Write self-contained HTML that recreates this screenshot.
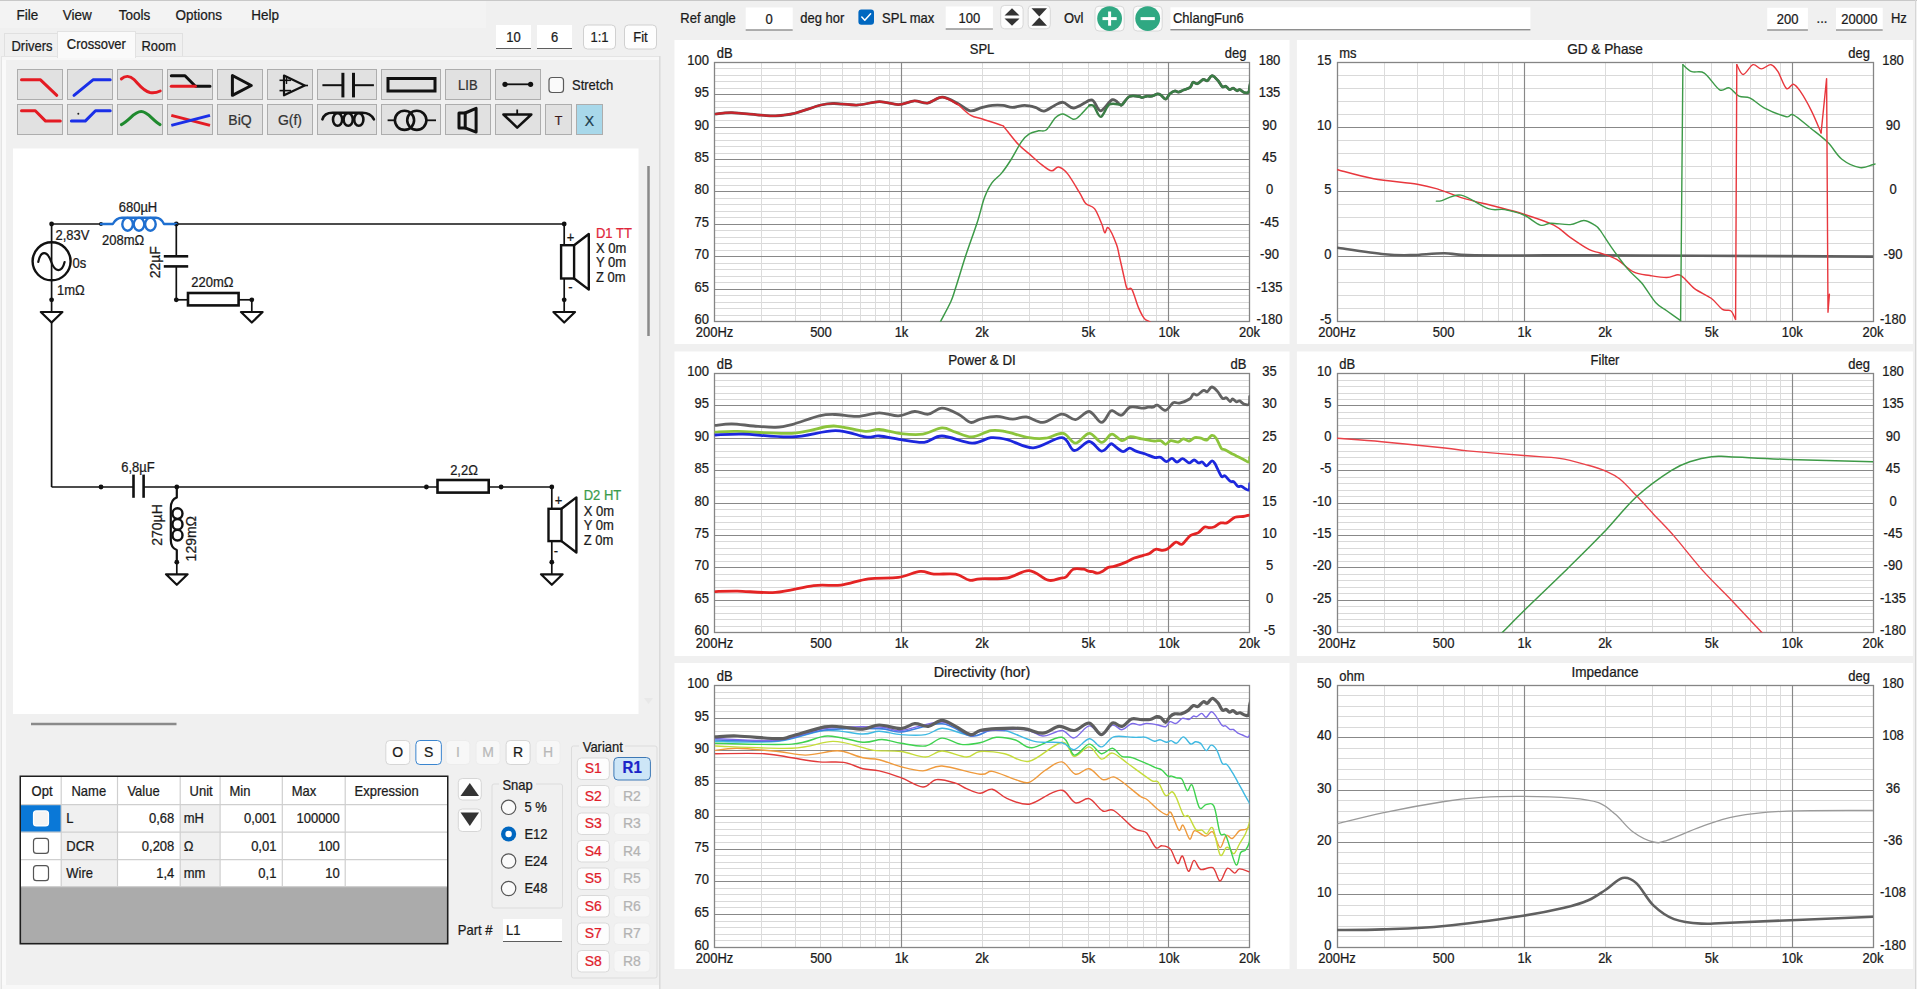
<!DOCTYPE html>
<html><head><meta charset="utf-8"><title>VituixCAD</title>
<style>
html,body{margin:0;padding:0;background:#f0f0f0;width:1917px;height:989px;overflow:hidden}
svg{position:absolute;left:0;top:0;display:block}
text{font-family:"Liberation Sans", sans-serif;stroke-width:0.25px;paint-order:stroke}
</style></head><body>
<svg width="1917" height="989" viewBox="0 0 1917 989">
<rect x="0" y="0" width="1917" height="989" fill="#f0f0f0" rx="0" />
<line x1="0" y1="0.5" x2="1917" y2="0.5" stroke="#c8c8c8" stroke-width="1" />
<line x1="1915.5" y1="0" x2="1915.5" y2="989" stroke="#d6d6d6" stroke-width="1" />
<rect x="0" y="1" width="486" height="27" fill="#f3f3f3" rx="0" />
<text transform="translate(16.6,20) scale(0.93,1)" font-size="14.51" fill="#1a1a1a" stroke="#1a1a1a" text-anchor="start">File</text>
<text transform="translate(62.8,20) scale(0.93,1)" font-size="14.51" fill="#1a1a1a" stroke="#1a1a1a" text-anchor="start">View</text>
<text transform="translate(118.8,20) scale(0.93,1)" font-size="14.51" fill="#1a1a1a" stroke="#1a1a1a" text-anchor="start">Tools</text>
<text transform="translate(175.6,20) scale(0.93,1)" font-size="14.51" fill="#1a1a1a" stroke="#1a1a1a" text-anchor="start">Options</text>
<text transform="translate(251.3,20) scale(0.93,1)" font-size="14.51" fill="#1a1a1a" stroke="#1a1a1a" text-anchor="start">Help</text>
<rect x="4.5" y="33.5" width="53" height="23" fill="#f0f0f0" stroke="#e0e0e0" stroke-width="1" rx="0" />
<rect x="135.5" y="33.5" width="47" height="23" fill="#f0f0f0" stroke="#e0e0e0" stroke-width="1" rx="0" />
<rect x="1.5" y="56.5" width="659" height="940" fill="#f0f0f0" stroke="#e4e4e4" stroke-width="1" rx="0" />
<rect x="2" y="57" width="4" height="932" fill="#fafafa" rx="0" />
<rect x="2" y="57" width="658" height="3" fill="#f7f7f7" rx="0" />
<rect x="57.5" y="31.5" width="78" height="26" fill="#fafafa" stroke="#e2e2e2" stroke-width="1" rx="0" />
<rect x="58" y="56" width="77" height="2" fill="#fafafa" rx="0" />
<text transform="translate(11.5,50.5) scale(0.93,1)" font-size="13.97" fill="#1a1a1a" stroke="#1a1a1a" text-anchor="start">Drivers</text>
<text transform="translate(66.8,48.5) scale(0.93,1)" font-size="13.97" fill="#1a1a1a" stroke="#1a1a1a" text-anchor="start">Crossover</text>
<text transform="translate(141.4,50.5) scale(0.93,1)" font-size="13.97" fill="#1a1a1a" stroke="#1a1a1a" text-anchor="start">Room</text>
<rect x="496" y="25" width="35" height="24" fill="#ffffff" rx="0" />
<line x1="496" y1="48.5" x2="531" y2="48.5" stroke="#5e5e5e" stroke-width="1" />
<text transform="translate(513.5,41.6) scale(0.93,1)" font-size="13.97" fill="#1a1a1a" stroke="#1a1a1a" text-anchor="middle">10</text>
<rect x="537" y="25" width="35" height="24" fill="#ffffff" rx="0" />
<line x1="537" y1="48.5" x2="572" y2="48.5" stroke="#5e5e5e" stroke-width="1" />
<text transform="translate(554.5,41.6) scale(0.93,1)" font-size="13.97" fill="#1a1a1a" stroke="#1a1a1a" text-anchor="middle">6</text>
<rect x="583.5" y="25.0" width="32" height="24" fill="#fdfdfd" stroke="#d0d0d0" stroke-width="1" rx="4" />
<text transform="translate(599.5,41.6) scale(0.93,1)" font-size="13.97" fill="#1a1a1a" stroke="#1a1a1a" text-anchor="middle">1:1</text>
<rect x="624.5" y="25.0" width="32" height="24" fill="#fdfdfd" stroke="#d0d0d0" stroke-width="1" rx="4" />
<text transform="translate(640.5,41.6) scale(0.93,1)" font-size="13.97" fill="#1a1a1a" stroke="#1a1a1a" text-anchor="middle">Fit</text>
<rect x="17.5" y="69.5" width="45" height="30" fill="#e1e1e1" stroke="#adadad" stroke-width="1" rx="0" />
<rect x="17.5" y="104.5" width="45" height="30" fill="#e1e1e1" stroke="#adadad" stroke-width="1" rx="0" />
<rect x="67.5" y="69.5" width="45" height="30" fill="#e1e1e1" stroke="#adadad" stroke-width="1" rx="0" />
<rect x="67.5" y="104.5" width="45" height="30" fill="#e1e1e1" stroke="#adadad" stroke-width="1" rx="0" />
<rect x="117.5" y="69.5" width="45" height="30" fill="#e1e1e1" stroke="#adadad" stroke-width="1" rx="0" />
<rect x="117.5" y="104.5" width="45" height="30" fill="#e1e1e1" stroke="#adadad" stroke-width="1" rx="0" />
<rect x="167.5" y="69.5" width="45" height="30" fill="#e1e1e1" stroke="#adadad" stroke-width="1" rx="0" />
<rect x="167.5" y="104.5" width="45" height="30" fill="#e1e1e1" stroke="#adadad" stroke-width="1" rx="0" />
<rect x="217.5" y="69.5" width="45" height="30" fill="#e1e1e1" stroke="#adadad" stroke-width="1" rx="0" />
<rect x="217.5" y="104.5" width="45" height="30" fill="#e1e1e1" stroke="#adadad" stroke-width="1" rx="0" />
<rect x="267.5" y="69.5" width="45" height="30" fill="#e1e1e1" stroke="#adadad" stroke-width="1" rx="0" />
<rect x="267.5" y="104.5" width="45" height="30" fill="#e1e1e1" stroke="#adadad" stroke-width="1" rx="0" />
<rect x="317.5" y="69.5" width="59" height="30" fill="#e1e1e1" stroke="#adadad" stroke-width="1" rx="0" />
<rect x="381.5" y="69.5" width="59" height="30" fill="#e1e1e1" stroke="#adadad" stroke-width="1" rx="0" />
<rect x="445.5" y="69.5" width="45" height="30" fill="#e1e1e1" stroke="#adadad" stroke-width="1" rx="0" />
<rect x="495.5" y="69.5" width="45" height="30" fill="#e1e1e1" stroke="#adadad" stroke-width="1" rx="0" />
<rect x="317.5" y="104.5" width="59" height="30" fill="#e1e1e1" stroke="#adadad" stroke-width="1" rx="0" />
<rect x="381.5" y="104.5" width="59" height="30" fill="#e1e1e1" stroke="#adadad" stroke-width="1" rx="0" />
<rect x="445.5" y="104.5" width="45" height="30" fill="#e1e1e1" stroke="#adadad" stroke-width="1" rx="0" />
<rect x="495.5" y="104.5" width="45" height="30" fill="#e1e1e1" stroke="#adadad" stroke-width="1" rx="0" />
<rect x="545.5" y="104.5" width="26" height="30" fill="#e1e1e1" stroke="#adadad" stroke-width="1" rx="0" />
<rect x="576.5" y="104.5" width="26" height="30" fill="#a8d8ea" stroke="#adadad" stroke-width="1" rx="0" />
<polyline points="21.5,79.8 40.5,79.8 56.8,95.3" stroke="#e41b23" stroke-width="3" fill="none" stroke-linejoin="round" stroke-linecap="round" />
<polyline points="74.0,95.3 93.0,79.8 110.2,79.8" stroke="#1a2fe8" stroke-width="3" fill="none" stroke-linejoin="round" stroke-linecap="round" />
<path d="M121.4,78.9 C125,75.5 130,75.5 134,79.5 C139,84.5 143,91 150,92.5 C154,93.2 157,92.5 160.2,91" stroke="#e41b23" stroke-width="3" fill="none" stroke-linejoin="round" stroke-linecap="round" />
<polyline points="171.3,75.8 185.0,75.8 195.4,86.2 210.0,86.2" stroke="#111" stroke-width="3" fill="none" stroke-linejoin="round" stroke-linecap="round" />
<polyline points="171.3,86.2 195.4,86.2" stroke="#e41b23" stroke-width="3" fill="none" stroke-linejoin="round" stroke-linecap="round" />
<path d="M232.4,75.5 L251.3,85.5 L232.4,95.3 Z" stroke="#111" stroke-width="3" fill="none" stroke-linejoin="round" stroke-linecap="round" />
<path d="M284,75.5 L304.7,85.5 L284,95.3 Z" stroke="#111" stroke-width="2.2" fill="none" stroke-linejoin="round" stroke-linecap="round" />
<line x1="279.5" y1="80.3" x2="291" y2="80.3" stroke="#111" stroke-width="1.6" />
<line x1="279.5" y1="90.6" x2="291" y2="90.6" stroke="#111" stroke-width="1.6" />
<line x1="286.5" y1="76.5" x2="286.5" y2="84" stroke="#111" stroke-width="1.4" />
<line x1="304.7" y1="85.5" x2="308" y2="85.5" stroke="#111" stroke-width="1.6" />
<line x1="322.4" y1="85.2" x2="342.9" y2="85.2" stroke="#111" stroke-width="2" />
<line x1="353.5" y1="85.2" x2="373.9" y2="85.2" stroke="#111" stroke-width="2" />
<line x1="342.9" y1="72.8" x2="342.9" y2="97.4" stroke="#111" stroke-width="3" />
<line x1="353.5" y1="72.8" x2="353.5" y2="97.4" stroke="#111" stroke-width="3" />
<rect x="388" y="78.5" width="47" height="12.5" fill="none" stroke="#111" stroke-width="3" rx="0" />
<text transform="translate(467.8,90) scale(0.93,1)" font-size="13.97" fill="#333" stroke="#333" text-anchor="middle">LIB</text>
<line x1="505" y1="84.3" x2="530.6" y2="84.3" stroke="#111" stroke-width="1.8" />
<circle cx="505" cy="84.3" r="2.6" fill="#111"/><circle cx="530.6" cy="84.3" r="2.6" fill="#111"/>
<rect x="549" y="77.5" width="14.5" height="15" fill="#fafafa" stroke="#5a5a5a" stroke-width="1.2" rx="3" />
<text transform="translate(572,89.5) scale(0.93,1)" font-size="13.97" fill="#1a1a1a" stroke="#1a1a1a" text-anchor="start">Stretch</text>
<polyline points="21.5,110.8 35.3,110.8 45.6,121.1 60.3,121.1" stroke="#e41b23" stroke-width="3" fill="none" stroke-linejoin="round" stroke-linecap="round" />
<polyline points="71.4,121.1 85.2,121.1 95.5,110.8 110.2,110.8" stroke="#1a2fe8" stroke-width="3" fill="none" stroke-linejoin="round" stroke-linecap="round" />
<circle cx="78.3" cy="113.7" r="1" fill="#222"/>
<path d="M121.4,124.6 C130,120 134,111.6 141.2,111.6 C148,111.6 152,120 160.1,124.6" stroke="#1f8a2e" stroke-width="3" fill="none" stroke-linejoin="round" stroke-linecap="round" />
<line x1="171.3" y1="115.4" x2="210" y2="125.4" stroke="#e41b23" stroke-width="3" />
<line x1="171.3" y1="125.4" x2="210" y2="115.4" stroke="#1a2fe8" stroke-width="3" />
<text transform="translate(240,125) scale(0.93,1)" font-size="15.05" fill="#333" stroke="#333" text-anchor="middle">BiQ</text>
<text transform="translate(290,125) scale(0.93,1)" font-size="15.05" fill="#333" stroke="#333" text-anchor="middle">G(f)</text>
<path d="M322.4,119.3 C324,114 329,112.5 334,112.8 L361,112.8 C366,112.5 371,114 373.9,119.3" stroke="#111" stroke-width="2.6" fill="none" stroke-linejoin="round" stroke-linecap="round" />
<ellipse cx="337.6" cy="119.5" rx="4.6" ry="6.3" fill="none" stroke="#111" stroke-width="2.6"/>
<ellipse cx="348.2" cy="119.5" rx="4.6" ry="6.3" fill="none" stroke="#111" stroke-width="2.6"/>
<ellipse cx="358.8" cy="119.5" rx="4.6" ry="6.3" fill="none" stroke="#111" stroke-width="2.6"/>
<line x1="387.6" y1="120.3" x2="395" y2="120.3" stroke="#111" stroke-width="1.8" />
<line x1="427" y1="120.3" x2="436" y2="120.3" stroke="#111" stroke-width="1.8" />
<circle cx="404.5" cy="120.3" r="9.6" fill="none" stroke="#111" stroke-width="2.6"/>
<circle cx="416.8" cy="120.3" r="9.6" fill="none" stroke="#111" stroke-width="2.6"/>
<path d="M459,113 L465.2,113 L465.2,127.9 L459,127.9 Z" stroke="#111" stroke-width="3" fill="none" stroke-linejoin="round" stroke-linecap="round" />
<path d="M465.2,113 L476.1,108.4 L476.1,132.1 L465.2,127.9" stroke="#111" stroke-width="3" fill="none" stroke-linejoin="round" stroke-linecap="round" />
<line x1="517.2" y1="109.5" x2="517.2" y2="114.5" stroke="#111" stroke-width="1.8" />
<path d="M503.5,114.5 L531.3,114.5 L517.2,127.6 Z" stroke="#111" stroke-width="2.6" fill="none" stroke-linejoin="round" stroke-linecap="round" />
<text transform="translate(558.6,125) scale(0.93,1)" font-size="13.44" fill="#3a1a1a" stroke="#3a1a1a" text-anchor="middle">T</text>
<text transform="translate(589.5,125.5) scale(0.93,1)" font-size="15.05" fill="#1a3a4a" stroke="#1a3a4a" text-anchor="middle">X</text>
<rect x="13" y="148.5" width="625.5" height="565.5" fill="#ffffff" rx="0" />
<line x1="648.5" y1="166" x2="648.5" y2="336" stroke="#8a8a8a" stroke-width="2.5" />
<path d="M644,698 L653,698 L648.5,704 Z" fill="#e8e8e8"/>
<line x1="31" y1="724" x2="176.5" y2="724" stroke="#8a8a8a" stroke-width="2.5" />
<line x1="51.6" y1="224" x2="101" y2="224" stroke="#111" stroke-width="1.7" />
<line x1="176.3" y1="224" x2="564.2" y2="224" stroke="#111" stroke-width="1.7" />
<circle cx="51.6" cy="224" r="2.4" fill="#111"/>
<circle cx="101" cy="224" r="2" fill="#111"/>
<circle cx="176.3" cy="224" r="2.4" fill="#111"/>
<line x1="51.6" y1="224" x2="51.6" y2="312" stroke="#111" stroke-width="1.7" />
<circle cx="51.6" cy="261.3" r="19" fill="none" stroke="#111" stroke-width="2.4"/>
<path d="M38.3,261.8 C40.5,251 47,249.5 51.3,262 C55,272.5 62,273 64.6,262" stroke="#111" stroke-width="2.2" fill="none" stroke-linejoin="round" stroke-linecap="round" />
<line x1="51.6" y1="242.3" x2="51.6" y2="280.3" stroke="#111" stroke-width="0" />
<circle cx="51.6" cy="299.8" r="2.4" fill="#111"/>
<path d="M40.8,312 L62.400000000000006,312 L51.6,322.5 Z" stroke="#111" stroke-width="2.2" fill="none" stroke-linejoin="round" stroke-linecap="round" />
<line x1="51.6" y1="322" x2="51.6" y2="487" stroke="#111" stroke-width="1.7" />
<text transform="translate(55.5,239.5) scale(0.93,1)" font-size="13.97" fill="#1a1a1a" stroke="#1a1a1a" text-anchor="start">2,83V</text>
<text transform="translate(72.5,268) scale(0.93,1)" font-size="13.97" fill="#1a1a1a" stroke="#1a1a1a" text-anchor="start">0s</text>
<text transform="translate(57,295) scale(0.93,1)" font-size="13.97" fill="#1a1a1a" stroke="#1a1a1a" text-anchor="start">1mΩ</text>
<path d="M101,224 L112.8,224 C115,220 118,217.8 122,217.8 L156,217.8 C160,217.8 162,220 164,224 L176.3,224" stroke="#1f6fd0" stroke-width="2.4" fill="none" stroke-linejoin="round" stroke-linecap="round" />
<ellipse cx="127.6" cy="224.3" rx="5.3" ry="6.4" fill="none" stroke="#1f6fd0" stroke-width="2.4"/>
<ellipse cx="139" cy="224.3" rx="5.3" ry="6.4" fill="none" stroke="#1f6fd0" stroke-width="2.4"/>
<ellipse cx="150.4" cy="224.3" rx="5.3" ry="6.4" fill="none" stroke="#1f6fd0" stroke-width="2.4"/>
<text transform="translate(138,211.5) scale(0.93,1)" font-size="13.97" fill="#1a1a1a" stroke="#1a1a1a" text-anchor="middle">680µH</text>
<text transform="translate(102,245) scale(0.93,1)" font-size="13.97" fill="#1a1a1a" stroke="#1a1a1a" text-anchor="start">208mΩ</text>
<line x1="176.3" y1="224" x2="176.3" y2="256.3" stroke="#111" stroke-width="1.7" />
<line x1="176.3" y1="266.4" x2="176.3" y2="300" stroke="#111" stroke-width="1.7" />
<line x1="163.8" y1="256.3" x2="188.2" y2="256.3" stroke="#111" stroke-width="2.6" />
<line x1="163.8" y1="266.4" x2="188.2" y2="266.4" stroke="#111" stroke-width="2.6" />
<text x="0" y="0" font-size="13.97" fill="#1a1a1a" stroke="#1a1a1a" text-anchor="middle" transform="translate(159.5,262.3) rotate(-90)">22µF</text>
<line x1="176.3" y1="299.8" x2="188" y2="299.8" stroke="#111" stroke-width="1.7" />
<rect x="188" y="293" width="50.6" height="12.4" fill="none" stroke="#111" stroke-width="2.6" rx="0" />
<line x1="238.6" y1="299.8" x2="251.8" y2="299.8" stroke="#111" stroke-width="1.7" />
<line x1="251.8" y1="299.8" x2="251.8" y2="312" stroke="#111" stroke-width="1.7" />
<circle cx="176.3" cy="299.8" r="2.4" fill="#111"/>
<circle cx="251.8" cy="299.8" r="2.4" fill="#111"/>
<path d="M241.0,312 L262.6,312 L251.8,322.5 Z" stroke="#111" stroke-width="2.2" fill="none" stroke-linejoin="round" stroke-linecap="round" />
<text transform="translate(212.3,286.5) scale(0.93,1)" font-size="13.97" fill="#1a1a1a" stroke="#1a1a1a" text-anchor="middle">220mΩ</text>
<line x1="564.2" y1="224" x2="564.2" y2="245.2" stroke="#111" stroke-width="1.7" />
<circle cx="564.2" cy="224" r="2.4" fill="#111"/>
<rect x="561.1" y="245.2" width="13.0" height="33.30000000000001" fill="none" stroke="#111" stroke-width="2.4" rx="0" />
<path d="M574.1,245.2 L588.8,234 L588.8,289.6 L574.1,278.5" stroke="#111" stroke-width="2.4" fill="none" stroke-linejoin="round" stroke-linecap="round" />
<line x1="564.2" y1="278.5" x2="564.2" y2="312" stroke="#111" stroke-width="1.7" />
<circle cx="564.2" cy="299.8" r="2.4" fill="#111"/>
<path d="M553.4000000000001,312 L575.0,312 L564.2,322.5 Z" stroke="#111" stroke-width="2.2" fill="none" stroke-linejoin="round" stroke-linecap="round" />
<text transform="translate(570.6,242) scale(0.93,1)" font-size="13.97" fill="#1a1a1a" stroke="#1a1a1a" text-anchor="middle">+</text>
<text transform="translate(570.3,292) scale(0.93,1)" font-size="13.97" fill="#1a1a1a" stroke="#1a1a1a" text-anchor="middle">-</text>
<text transform="translate(596,238) scale(0.93,1)" font-size="13.97" fill="#e0263a" stroke="#e0263a" text-anchor="start">D1 TT</text>
<text transform="translate(596,252.5) scale(0.93,1)" font-size="13.97" fill="#1a1a1a" stroke="#1a1a1a" text-anchor="start">X 0m</text>
<text transform="translate(596,267) scale(0.93,1)" font-size="13.97" fill="#1a1a1a" stroke="#1a1a1a" text-anchor="start">Y 0m</text>
<text transform="translate(596,281.5) scale(0.93,1)" font-size="13.97" fill="#1a1a1a" stroke="#1a1a1a" text-anchor="start">Z 0m</text>
<line x1="51.6" y1="487" x2="133.5" y2="487" stroke="#111" stroke-width="1.7" />
<line x1="143.6" y1="487" x2="437.5" y2="487" stroke="#111" stroke-width="1.7" />
<circle cx="101" cy="487" r="2.4" fill="#111"/>
<circle cx="176.8" cy="487" r="2.4" fill="#111"/>
<circle cx="426.4" cy="487" r="2.4" fill="#111"/>
<line x1="133.5" y1="474.6" x2="133.5" y2="497.8" stroke="#111" stroke-width="2.6" />
<line x1="143.6" y1="474.6" x2="143.6" y2="497.8" stroke="#111" stroke-width="2.6" />
<text transform="translate(138,471.5) scale(0.93,1)" font-size="13.97" fill="#1a1a1a" stroke="#1a1a1a" text-anchor="middle">6,8µF</text>
<path d="M176.8,487 L176.8,497.4 C172.5,499 170.8,503 170.8,508 L170.8,540 C170.8,545 172.5,548.5 176.8,550 L176.8,562.2" stroke="#111" stroke-width="2.2" fill="none" stroke-linejoin="round" stroke-linecap="round" />
<ellipse cx="177.5" cy="513.6" rx="5" ry="5.3" fill="none" stroke="#111" stroke-width="2.4"/>
<ellipse cx="177.5" cy="524.4" rx="5" ry="5.3" fill="none" stroke="#111" stroke-width="2.4"/>
<ellipse cx="177.5" cy="535.2" rx="5" ry="5.3" fill="none" stroke="#111" stroke-width="2.4"/>
<line x1="176.8" y1="562.2" x2="176.8" y2="574.3" stroke="#111" stroke-width="1.7" />
<circle cx="176.8" cy="562.2" r="2.4" fill="#111"/>
<path d="M166.0,574.3 L187.60000000000002,574.3 L176.8,584.8 Z" stroke="#111" stroke-width="2.2" fill="none" stroke-linejoin="round" stroke-linecap="round" />
<text x="0" y="0" font-size="13.97" fill="#1a1a1a" stroke="#1a1a1a" text-anchor="middle" transform="translate(161.8,525) rotate(-90)">270µH</text>
<text x="0" y="0" font-size="13.97" fill="#1a1a1a" stroke="#1a1a1a" text-anchor="middle" transform="translate(195.8,538.7) rotate(-90)">129mΩ</text>
<rect x="437.5" y="480" width="51.2" height="12.6" fill="none" stroke="#111" stroke-width="2.6" rx="0" />
<line x1="488.7" y1="487" x2="551.8" y2="487" stroke="#111" stroke-width="1.7" />
<circle cx="501.1" cy="487" r="2.4" fill="#111"/>
<circle cx="551.8" cy="487" r="2.4" fill="#111"/>
<text transform="translate(464,474.5) scale(0.93,1)" font-size="13.97" fill="#1a1a1a" stroke="#1a1a1a" text-anchor="middle">2,2Ω</text>
<line x1="551.8" y1="487" x2="551.8" y2="508.8" stroke="#111" stroke-width="1.7" />
<rect x="548.5" y="508.8" width="13.0" height="32.30000000000001" fill="none" stroke="#111" stroke-width="2.4" rx="0" />
<path d="M561.5,508.8 L576.4,497.4 L576.4,552.5 L561.5,541.1" stroke="#111" stroke-width="2.4" fill="none" stroke-linejoin="round" stroke-linecap="round" />
<line x1="551.8" y1="541.1" x2="551.8" y2="574.3" stroke="#111" stroke-width="1.7" />
<circle cx="551.8" cy="562.2" r="2.4" fill="#111"/>
<path d="M541.0,574.3 L562.5999999999999,574.3 L551.8,584.8 Z" stroke="#111" stroke-width="2.2" fill="none" stroke-linejoin="round" stroke-linecap="round" />
<text transform="translate(558.6,505) scale(0.93,1)" font-size="13.97" fill="#1a1a1a" stroke="#1a1a1a" text-anchor="middle">+</text>
<text transform="translate(556,556) scale(0.93,1)" font-size="13.97" fill="#1a1a1a" stroke="#1a1a1a" text-anchor="middle">-</text>
<text transform="translate(583.7,500) scale(0.93,1)" font-size="13.97" fill="#3b9b4b" stroke="#3b9b4b" text-anchor="start">D2 HT</text>
<text transform="translate(583.7,515.5) scale(0.93,1)" font-size="13.97" fill="#1a1a1a" stroke="#1a1a1a" text-anchor="start">X 0m</text>
<text transform="translate(583.7,530) scale(0.93,1)" font-size="13.97" fill="#1a1a1a" stroke="#1a1a1a" text-anchor="start">Y 0m</text>
<text transform="translate(583.7,544.5) scale(0.93,1)" font-size="13.97" fill="#1a1a1a" stroke="#1a1a1a" text-anchor="start">Z 0m</text>
<rect x="385.8" y="740.5" width="24" height="24" fill="#fdfdfd" stroke="#d6d6d6" stroke-width="1" rx="4" />
<text transform="translate(397.8,757.1) scale(0.93,1)" font-size="15.05" fill="#1a1a1a" stroke="#1a1a1a" text-anchor="middle">O</text>
<rect x="415.87" y="740.5" width="25.5" height="24" fill="#fdfdfd" stroke="#3a85cf" stroke-width="1" rx="4" />
<text transform="translate(428.62,757.1) scale(0.93,1)" font-size="15.05" fill="#1a1a1a" stroke="#1a1a1a" text-anchor="middle">S</text>
<rect x="445.94" y="740.5" width="24" height="24" fill="#f7f7f7" stroke="#ececec" stroke-width="1" rx="4" />
<text transform="translate(457.94,757.1) scale(0.93,1)" font-size="15.05" fill="#b8b8b8" stroke="#b8b8b8" text-anchor="middle">I</text>
<rect x="476.01" y="740.5" width="24" height="24" fill="#f7f7f7" stroke="#ececec" stroke-width="1" rx="4" />
<text transform="translate(488.01,757.1) scale(0.93,1)" font-size="15.05" fill="#b8b8b8" stroke="#b8b8b8" text-anchor="middle">M</text>
<rect x="506.08000000000004" y="740.5" width="24" height="24" fill="#fdfdfd" stroke="#d6d6d6" stroke-width="1" rx="4" />
<text transform="translate(518.08,757.1) scale(0.93,1)" font-size="15.05" fill="#1a1a1a" stroke="#1a1a1a" text-anchor="middle">R</text>
<rect x="536.15" y="740.5" width="24" height="24" fill="#f7f7f7" stroke="#ececec" stroke-width="1" rx="4" />
<text transform="translate(548.15,757.1) scale(0.93,1)" font-size="15.05" fill="#b8b8b8" stroke="#b8b8b8" text-anchor="middle">H</text>
<rect x="20.3" y="776.3" width="427.4" height="167.4" fill="#ababab" stroke="#1e1e1e" stroke-width="1.6" rx="0" />
<rect x="21" y="777" width="426" height="110" fill="#ffffff" rx="0" />
<rect x="61.2" y="804.7" width="56.3" height="27.5" fill="#f0f0f0" rx="0" />
<rect x="180.2" y="804.7" width="39.9" height="27.5" fill="#f0f0f0" rx="0" />
<rect x="61.2" y="832.2" width="56.3" height="27.5" fill="#f0f0f0" rx="0" />
<rect x="180.2" y="832.2" width="39.9" height="27.5" fill="#f0f0f0" rx="0" />
<rect x="61.2" y="859.7" width="56.3" height="27.0" fill="#f0f0f0" rx="0" />
<rect x="180.2" y="859.7" width="39.9" height="27.0" fill="#f0f0f0" rx="0" />
<rect x="21" y="805" width="40.2" height="27.2" fill="#0a78d7" rx="0" />
<line x1="61.2" y1="777" x2="61.2" y2="886.7" stroke="#cfcfcf" stroke-width="1.2" />
<line x1="117.5" y1="777" x2="117.5" y2="886.7" stroke="#cfcfcf" stroke-width="1.2" />
<line x1="180.2" y1="777" x2="180.2" y2="886.7" stroke="#cfcfcf" stroke-width="1.2" />
<line x1="220.1" y1="777" x2="220.1" y2="886.7" stroke="#cfcfcf" stroke-width="1.2" />
<line x1="282.3" y1="777" x2="282.3" y2="886.7" stroke="#cfcfcf" stroke-width="1.2" />
<line x1="345.2" y1="777" x2="345.2" y2="886.7" stroke="#cfcfcf" stroke-width="1.2" />
<line x1="21" y1="804.7" x2="447" y2="804.7" stroke="#cfcfcf" stroke-width="1.2" />
<line x1="21" y1="832.2" x2="447" y2="832.2" stroke="#cfcfcf" stroke-width="1.2" />
<line x1="21" y1="859.7" x2="447" y2="859.7" stroke="#cfcfcf" stroke-width="1.2" />
<line x1="21" y1="886.7" x2="447" y2="886.7" stroke="#cfcfcf" stroke-width="1.2" />
<text transform="translate(31.6,796) scale(0.93,1)" font-size="13.97" fill="#1a1a1a" stroke="#1a1a1a" text-anchor="start">Opt</text>
<text transform="translate(71.5,796) scale(0.93,1)" font-size="13.97" fill="#1a1a1a" stroke="#1a1a1a" text-anchor="start">Name</text>
<text transform="translate(127.4,796) scale(0.93,1)" font-size="13.97" fill="#1a1a1a" stroke="#1a1a1a" text-anchor="start">Value</text>
<text transform="translate(189.6,796) scale(0.93,1)" font-size="13.97" fill="#1a1a1a" stroke="#1a1a1a" text-anchor="start">Unit</text>
<text transform="translate(229.5,796) scale(0.93,1)" font-size="13.97" fill="#1a1a1a" stroke="#1a1a1a" text-anchor="start">Min</text>
<text transform="translate(291.7,796) scale(0.93,1)" font-size="13.97" fill="#1a1a1a" stroke="#1a1a1a" text-anchor="start">Max</text>
<text transform="translate(354.6,796) scale(0.93,1)" font-size="13.97" fill="#1a1a1a" stroke="#1a1a1a" text-anchor="start">Expression</text>
<rect x="33.5" y="810.95" width="15" height="15" fill="#f4f4f4" stroke="#ffffff" stroke-width="1.2" rx="3" />
<text transform="translate(66.3,823.25) scale(0.93,1)" font-size="13.97" fill="#1a1a1a" stroke="#1a1a1a" text-anchor="start">L</text>
<text transform="translate(174.3,823.25) scale(0.93,1)" font-size="13.97" fill="#1a1a1a" stroke="#1a1a1a" text-anchor="end">0,68</text>
<text transform="translate(183.7,823.25) scale(0.93,1)" font-size="13.97" fill="#1a1a1a" stroke="#1a1a1a" text-anchor="start">mH</text>
<text transform="translate(276.4,823.25) scale(0.93,1)" font-size="13.97" fill="#1a1a1a" stroke="#1a1a1a" text-anchor="end">0,001</text>
<text transform="translate(339.8,823.25) scale(0.93,1)" font-size="13.97" fill="#1a1a1a" stroke="#1a1a1a" text-anchor="end">100000</text>
<rect x="33.5" y="838.45" width="15" height="15" fill="#ffffff" stroke="#555" stroke-width="1.2" rx="3" />
<text transform="translate(66.3,850.75) scale(0.93,1)" font-size="13.97" fill="#1a1a1a" stroke="#1a1a1a" text-anchor="start">DCR</text>
<text transform="translate(174.3,850.75) scale(0.93,1)" font-size="13.97" fill="#1a1a1a" stroke="#1a1a1a" text-anchor="end">0,208</text>
<text transform="translate(183.7,850.75) scale(0.93,1)" font-size="13.97" fill="#1a1a1a" stroke="#1a1a1a" text-anchor="start">Ω</text>
<text transform="translate(276.4,850.75) scale(0.93,1)" font-size="13.97" fill="#1a1a1a" stroke="#1a1a1a" text-anchor="end">0,01</text>
<text transform="translate(339.8,850.75) scale(0.93,1)" font-size="13.97" fill="#1a1a1a" stroke="#1a1a1a" text-anchor="end">100</text>
<rect x="33.5" y="865.7" width="15" height="15" fill="#ffffff" stroke="#555" stroke-width="1.2" rx="3" />
<text transform="translate(66.3,878.0) scale(0.93,1)" font-size="13.97" fill="#1a1a1a" stroke="#1a1a1a" text-anchor="start">Wire</text>
<text transform="translate(174.3,878.0) scale(0.93,1)" font-size="13.97" fill="#1a1a1a" stroke="#1a1a1a" text-anchor="end">1,4</text>
<text transform="translate(183.7,878.0) scale(0.93,1)" font-size="13.97" fill="#1a1a1a" stroke="#1a1a1a" text-anchor="start">mm</text>
<text transform="translate(276.4,878.0) scale(0.93,1)" font-size="13.97" fill="#1a1a1a" stroke="#1a1a1a" text-anchor="end">0,1</text>
<text transform="translate(339.8,878.0) scale(0.93,1)" font-size="13.97" fill="#1a1a1a" stroke="#1a1a1a" text-anchor="end">10</text>
<rect x="458.3" y="778.5" width="23" height="21.5" fill="#fdfdfd" stroke="#d6d6d6" stroke-width="1" rx="4" />
<path d="M460.5,796 L479,796 L469.8,783 Z" fill="#333"/>
<rect x="458.3" y="809.0" width="23" height="22.5" fill="#fdfdfd" stroke="#d6d6d6" stroke-width="1" rx="4" />
<path d="M460.5,812.5 L479,812.5 L469.8,826 Z" fill="#333"/>
<rect x="492" y="784" width="70.5" height="124" fill="none" stroke="#dcdcdc" stroke-width="1" rx="2" />
<rect x="499" y="776" width="37" height="14" fill="#f0f0f0" rx="0" />
<text transform="translate(502.4,789.5) scale(0.93,1)" font-size="13.97" fill="#1a1a1a" stroke="#1a1a1a" text-anchor="start">Snap</text>
<circle cx="508.6" cy="807.3" r="7.2" fill="#fafafa" stroke="#555" stroke-width="1.2"/>
<text transform="translate(524.4,812.0999999999999) scale(0.93,1)" font-size="13.97" fill="#1a1a1a" stroke="#1a1a1a" text-anchor="start">5 %</text>
<circle cx="508.6" cy="834" r="7.6" fill="#0067c0"/><circle cx="508.6" cy="834" r="3.2" fill="#fff"/>
<text transform="translate(524.4,838.8) scale(0.93,1)" font-size="13.97" fill="#1a1a1a" stroke="#1a1a1a" text-anchor="start">E12</text>
<circle cx="508.6" cy="861" r="7.2" fill="#fafafa" stroke="#555" stroke-width="1.2"/>
<text transform="translate(524.4,865.8) scale(0.93,1)" font-size="13.97" fill="#1a1a1a" stroke="#1a1a1a" text-anchor="start">E24</text>
<circle cx="508.6" cy="888.5" r="7.2" fill="#fafafa" stroke="#555" stroke-width="1.2"/>
<text transform="translate(524.4,893.3) scale(0.93,1)" font-size="13.97" fill="#1a1a1a" stroke="#1a1a1a" text-anchor="start">E48</text>
<text transform="translate(457.8,935) scale(0.93,1)" font-size="13.97" fill="#1a1a1a" stroke="#1a1a1a" text-anchor="start">Part #</text>
<rect x="503" y="919" width="59" height="23" fill="#ffffff" rx="0" />
<line x1="503" y1="941.5" x2="562" y2="941.5" stroke="#5e5e5e" stroke-width="1" />
<text transform="translate(None,935.1) scale(0.93,1)" font-size="13.97" fill="#1a1a1a" stroke="#1a1a1a" text-anchor="start"></text>
<text transform="translate(506,935) scale(0.93,1)" font-size="13.97" fill="#1a1a1a" stroke="#1a1a1a" text-anchor="start">L1</text>
<rect x="571.5" y="746" width="85.5" height="232" fill="none" stroke="#dcdcdc" stroke-width="1" rx="2" />
<rect x="579" y="740" width="46" height="14" fill="#f0f0f0" rx="0" />
<text transform="translate(582.7,751.5) scale(0.93,1)" font-size="13.97" fill="#1a1a1a" stroke="#1a1a1a" text-anchor="start">Variant</text>
<rect x="577.3" y="758.0" width="32" height="21.5" fill="#fdfdfd" stroke="#d9d9d9" stroke-width="1" rx="4" />
<text transform="translate(593.3,773.35) scale(0.93,1)" font-size="15.05" fill="#e0202a" stroke="#e0202a" text-anchor="middle">S1</text>
<rect x="613.9" y="757.5" width="36.5" height="22.5" fill="#cde6f7" stroke="#3d78b5" stroke-width="1" rx="4" />
<text transform="translate(632.15,773.35) scale(0.93,1)" font-size="16.12" fill="#1a24c8" stroke="#1a24c8" text-anchor="middle" font-weight="bold">R1</text>
<rect x="577.3" y="785.5" width="32" height="21.5" fill="#fdfdfd" stroke="#d9d9d9" stroke-width="1" rx="4" />
<text transform="translate(593.3,800.85) scale(0.93,1)" font-size="15.05" fill="#e0202a" stroke="#e0202a" text-anchor="middle">S2</text>
<rect x="613.9" y="785.5" width="36" height="21.5" fill="#f7f7f7" stroke="#ededed" stroke-width="1" rx="4" />
<text transform="translate(631.9,800.85) scale(0.93,1)" font-size="15.05" fill="#b3b3b3" stroke="#b3b3b3" text-anchor="middle">R2</text>
<rect x="577.3" y="813.0" width="32" height="21.5" fill="#fdfdfd" stroke="#d9d9d9" stroke-width="1" rx="4" />
<text transform="translate(593.3,828.35) scale(0.93,1)" font-size="15.05" fill="#e0202a" stroke="#e0202a" text-anchor="middle">S3</text>
<rect x="613.9" y="813.0" width="36" height="21.5" fill="#f7f7f7" stroke="#ededed" stroke-width="1" rx="4" />
<text transform="translate(631.9,828.35) scale(0.93,1)" font-size="15.05" fill="#b3b3b3" stroke="#b3b3b3" text-anchor="middle">R3</text>
<rect x="577.3" y="840.5" width="32" height="21.5" fill="#fdfdfd" stroke="#d9d9d9" stroke-width="1" rx="4" />
<text transform="translate(593.3,855.85) scale(0.93,1)" font-size="15.05" fill="#e0202a" stroke="#e0202a" text-anchor="middle">S4</text>
<rect x="613.9" y="840.5" width="36" height="21.5" fill="#f7f7f7" stroke="#ededed" stroke-width="1" rx="4" />
<text transform="translate(631.9,855.85) scale(0.93,1)" font-size="15.05" fill="#b3b3b3" stroke="#b3b3b3" text-anchor="middle">R4</text>
<rect x="577.3" y="868.0" width="32" height="21.5" fill="#fdfdfd" stroke="#d9d9d9" stroke-width="1" rx="4" />
<text transform="translate(593.3,883.35) scale(0.93,1)" font-size="15.05" fill="#e0202a" stroke="#e0202a" text-anchor="middle">S5</text>
<rect x="613.9" y="868.0" width="36" height="21.5" fill="#f7f7f7" stroke="#ededed" stroke-width="1" rx="4" />
<text transform="translate(631.9,883.35) scale(0.93,1)" font-size="15.05" fill="#b3b3b3" stroke="#b3b3b3" text-anchor="middle">R5</text>
<rect x="577.3" y="895.5" width="32" height="21.5" fill="#fdfdfd" stroke="#d9d9d9" stroke-width="1" rx="4" />
<text transform="translate(593.3,910.85) scale(0.93,1)" font-size="15.05" fill="#e0202a" stroke="#e0202a" text-anchor="middle">S6</text>
<rect x="613.9" y="895.5" width="36" height="21.5" fill="#f7f7f7" stroke="#ededed" stroke-width="1" rx="4" />
<text transform="translate(631.9,910.85) scale(0.93,1)" font-size="15.05" fill="#b3b3b3" stroke="#b3b3b3" text-anchor="middle">R6</text>
<rect x="577.3" y="923.0" width="32" height="21.5" fill="#fdfdfd" stroke="#d9d9d9" stroke-width="1" rx="4" />
<text transform="translate(593.3,938.35) scale(0.93,1)" font-size="15.05" fill="#e0202a" stroke="#e0202a" text-anchor="middle">S7</text>
<rect x="613.9" y="923.0" width="36" height="21.5" fill="#f7f7f7" stroke="#ededed" stroke-width="1" rx="4" />
<text transform="translate(631.9,938.35) scale(0.93,1)" font-size="15.05" fill="#b3b3b3" stroke="#b3b3b3" text-anchor="middle">R7</text>
<rect x="577.3" y="950.5" width="32" height="21.5" fill="#fdfdfd" stroke="#d9d9d9" stroke-width="1" rx="4" />
<text transform="translate(593.3,965.85) scale(0.93,1)" font-size="15.05" fill="#e0202a" stroke="#e0202a" text-anchor="middle">S8</text>
<rect x="613.9" y="950.5" width="36" height="21.5" fill="#f7f7f7" stroke="#ededed" stroke-width="1" rx="4" />
<text transform="translate(631.9,965.85) scale(0.93,1)" font-size="15.05" fill="#b3b3b3" stroke="#b3b3b3" text-anchor="middle">R8</text>
<line x1="659.5" y1="56" x2="659.5" y2="989" stroke="#dadada" stroke-width="1" />
<rect x="2" y="985" width="657" height="4" fill="#f8f8f8" rx="0" />
<text transform="translate(680.3,23.2) scale(0.93,1)" font-size="13.97" fill="#1a1a1a" stroke="#1a1a1a" text-anchor="start">Ref angle</text>
<rect x="745.7" y="7.5" width="47" height="23" fill="#ffffff" rx="0" />
<line x1="745.7" y1="30.0" x2="792.7" y2="30.0" stroke="#5e5e5e" stroke-width="1" />
<text transform="translate(769.2,23.6) scale(0.93,1)" font-size="13.97" fill="#1a1a1a" stroke="#1a1a1a" text-anchor="middle">0</text>
<text transform="translate(800.2,23.2) scale(0.93,1)" font-size="13.97" fill="#1a1a1a" stroke="#1a1a1a" text-anchor="start">deg hor</text>
<rect x="858.4" y="9.4" width="15.6" height="15.4" fill="#0067c0" rx="3" />
<path d="M861.8,17 L864.8,20.2 L870.6,13.8" stroke="#ffffff" stroke-width="1.5" fill="none" stroke-linejoin="round" stroke-linecap="round" />
<text transform="translate(882.1,23.2) scale(0.93,1)" font-size="13.97" fill="#1a1a1a" stroke="#1a1a1a" text-anchor="start">SPL max</text>
<rect x="945.7" y="6.5" width="47.2" height="23" fill="#ffffff" rx="0" />
<line x1="945.7" y1="29.0" x2="992.9000000000001" y2="29.0" stroke="#5e5e5e" stroke-width="1" />
<text transform="translate(969.3000000000001,22.6) scale(0.93,1)" font-size="13.97" fill="#1a1a1a" stroke="#1a1a1a" text-anchor="middle">100</text>
<rect x="1000.7" y="5.4" width="22.4" height="23.4" fill="#fdfdfd" stroke="#d8d8d8" stroke-width="1" rx="4" />
<path d="M1004.5,15.5 L1019.5,15.5 L1012,8.2 Z M1004.5,18.5 L1019.5,18.5 L1012,25.8 Z" fill="#333"/>
<rect x="1028.2" y="5.4" width="22.1" height="23.4" fill="#fdfdfd" stroke="#d8d8d8" stroke-width="1" rx="4" />
<path d="M1031.5,8.2 L1047,8.2 L1039.3,16.5 Z M1031.5,25.8 L1047,25.8 L1039.3,17.5 Z" fill="#333"/>
<text transform="translate(1064,23.2) scale(0.93,1)" font-size="13.97" fill="#1a1a1a" stroke="#1a1a1a" text-anchor="start">Ovl</text>
<rect x="1095.0" y="6.2" width="29.2" height="24.8" fill="#fbfbfb" stroke="#d8d8d8" stroke-width="1" rx="4" />
<circle cx="1109.6" cy="18.6" r="12.4" fill="#2fa882"/>
<line x1="1102.5" y1="18.6" x2="1116.7" y2="18.6" stroke="#fff" stroke-width="3" />
<line x1="1109.6" y1="11.5" x2="1109.6" y2="25.7" stroke="#fff" stroke-width="3" />
<rect x="1133.3" y="6.2" width="28.9" height="24.8" fill="#fbfbfb" stroke="#d8d8d8" stroke-width="1" rx="4" />
<circle cx="1147.7" cy="18.6" r="12.4" fill="#2fa882"/>
<line x1="1140.6" y1="18.6" x2="1154.8" y2="18.6" stroke="#fff" stroke-width="3" />
<rect x="1170.4" y="7.3" width="360" height="23" fill="#ffffff" rx="0" />
<line x1="1170.4" y1="29.8" x2="1530.4" y2="29.8" stroke="#5e5e5e" stroke-width="1" />
<text transform="translate(None,23.4) scale(0.93,1)" font-size="13.97" fill="#1a1a1a" stroke="#1a1a1a" text-anchor="start"></text>
<text transform="translate(1173,23.2) scale(0.93,1)" font-size="13.97" fill="#1a1a1a" stroke="#1a1a1a" text-anchor="start">ChlangFun6</text>
<rect x="1767.2" y="7.8" width="40.7" height="22.7" fill="#ffffff" rx="0" />
<line x1="1767.2" y1="30.0" x2="1807.9" y2="30.0" stroke="#5e5e5e" stroke-width="1" />
<text transform="translate(1787.55,23.75) scale(0.93,1)" font-size="13.97" fill="#1a1a1a" stroke="#1a1a1a" text-anchor="middle">200</text>
<text transform="translate(1816.6,23.2) scale(0.93,1)" font-size="13.97" fill="#1a1a1a" stroke="#1a1a1a" text-anchor="start">...</text>
<rect x="1836" y="7.8" width="46.7" height="22.7" fill="#ffffff" rx="0" />
<line x1="1836" y1="30.0" x2="1882.7" y2="30.0" stroke="#5e5e5e" stroke-width="1" />
<text transform="translate(1859.35,23.75) scale(0.93,1)" font-size="13.97" fill="#1a1a1a" stroke="#1a1a1a" text-anchor="middle">20000</text>
<text transform="translate(1891,23.2) scale(0.93,1)" font-size="13.97" fill="#1a1a1a" stroke="#1a1a1a" text-anchor="start">Hz</text>
<rect x="674.5" y="40" width="615" height="304" fill="#ffffff" rx="0" />
<line x1="714.5" y1="68.5" x2="1249.5" y2="68.5" stroke="#d9d9d9" stroke-width="1" />
<line x1="714.5" y1="75.5" x2="1249.5" y2="75.5" stroke="#d9d9d9" stroke-width="1" />
<line x1="714.5" y1="81.5" x2="1249.5" y2="81.5" stroke="#d9d9d9" stroke-width="1" />
<line x1="714.5" y1="88.5" x2="1249.5" y2="88.5" stroke="#d9d9d9" stroke-width="1" />
<line x1="714.5" y1="101.5" x2="1249.5" y2="101.5" stroke="#d9d9d9" stroke-width="1" />
<line x1="714.5" y1="107.5" x2="1249.5" y2="107.5" stroke="#d9d9d9" stroke-width="1" />
<line x1="714.5" y1="114.5" x2="1249.5" y2="114.5" stroke="#d9d9d9" stroke-width="1" />
<line x1="714.5" y1="120.5" x2="1249.5" y2="120.5" stroke="#d9d9d9" stroke-width="1" />
<line x1="714.5" y1="133.5" x2="1249.5" y2="133.5" stroke="#d9d9d9" stroke-width="1" />
<line x1="714.5" y1="140.5" x2="1249.5" y2="140.5" stroke="#d9d9d9" stroke-width="1" />
<line x1="714.5" y1="146.5" x2="1249.5" y2="146.5" stroke="#d9d9d9" stroke-width="1" />
<line x1="714.5" y1="153.5" x2="1249.5" y2="153.5" stroke="#d9d9d9" stroke-width="1" />
<line x1="714.5" y1="166.5" x2="1249.5" y2="166.5" stroke="#d9d9d9" stroke-width="1" />
<line x1="714.5" y1="172.5" x2="1249.5" y2="172.5" stroke="#d9d9d9" stroke-width="1" />
<line x1="714.5" y1="178.5" x2="1249.5" y2="178.5" stroke="#d9d9d9" stroke-width="1" />
<line x1="714.5" y1="185.5" x2="1249.5" y2="185.5" stroke="#d9d9d9" stroke-width="1" />
<line x1="714.5" y1="198.5" x2="1249.5" y2="198.5" stroke="#d9d9d9" stroke-width="1" />
<line x1="714.5" y1="204.5" x2="1249.5" y2="204.5" stroke="#d9d9d9" stroke-width="1" />
<line x1="714.5" y1="211.5" x2="1249.5" y2="211.5" stroke="#d9d9d9" stroke-width="1" />
<line x1="714.5" y1="217.5" x2="1249.5" y2="217.5" stroke="#d9d9d9" stroke-width="1" />
<line x1="714.5" y1="230.5" x2="1249.5" y2="230.5" stroke="#d9d9d9" stroke-width="1" />
<line x1="714.5" y1="237.5" x2="1249.5" y2="237.5" stroke="#d9d9d9" stroke-width="1" />
<line x1="714.5" y1="243.5" x2="1249.5" y2="243.5" stroke="#d9d9d9" stroke-width="1" />
<line x1="714.5" y1="250.5" x2="1249.5" y2="250.5" stroke="#d9d9d9" stroke-width="1" />
<line x1="714.5" y1="263.5" x2="1249.5" y2="263.5" stroke="#d9d9d9" stroke-width="1" />
<line x1="714.5" y1="269.5" x2="1249.5" y2="269.5" stroke="#d9d9d9" stroke-width="1" />
<line x1="714.5" y1="276.5" x2="1249.5" y2="276.5" stroke="#d9d9d9" stroke-width="1" />
<line x1="714.5" y1="282.5" x2="1249.5" y2="282.5" stroke="#d9d9d9" stroke-width="1" />
<line x1="714.5" y1="295.5" x2="1249.5" y2="295.5" stroke="#d9d9d9" stroke-width="1" />
<line x1="714.5" y1="302.5" x2="1249.5" y2="302.5" stroke="#d9d9d9" stroke-width="1" />
<line x1="714.5" y1="308.5" x2="1249.5" y2="308.5" stroke="#d9d9d9" stroke-width="1" />
<line x1="714.5" y1="315.5" x2="1249.5" y2="315.5" stroke="#d9d9d9" stroke-width="1" />
<line x1="761.5" y1="62.2" x2="761.5" y2="321.7" stroke="#dcdcdc" stroke-width="1" />
<line x1="795.5" y1="62.2" x2="795.5" y2="321.7" stroke="#dcdcdc" stroke-width="1" />
<line x1="820.5" y1="62.2" x2="820.5" y2="321.7" stroke="#dcdcdc" stroke-width="1" />
<line x1="842.5" y1="62.2" x2="842.5" y2="321.7" stroke="#dcdcdc" stroke-width="1" />
<line x1="860.5" y1="62.2" x2="860.5" y2="321.7" stroke="#dcdcdc" stroke-width="1" />
<line x1="875.5" y1="62.2" x2="875.5" y2="321.7" stroke="#dcdcdc" stroke-width="1" />
<line x1="889.5" y1="62.2" x2="889.5" y2="321.7" stroke="#dcdcdc" stroke-width="1" />
<line x1="982.5" y1="62.2" x2="982.5" y2="321.7" stroke="#dcdcdc" stroke-width="1" />
<line x1="1029.5" y1="62.2" x2="1029.5" y2="321.7" stroke="#dcdcdc" stroke-width="1" />
<line x1="1062.5" y1="62.2" x2="1062.5" y2="321.7" stroke="#dcdcdc" stroke-width="1" />
<line x1="1088.5" y1="62.2" x2="1088.5" y2="321.7" stroke="#dcdcdc" stroke-width="1" />
<line x1="1109.5" y1="62.2" x2="1109.5" y2="321.7" stroke="#dcdcdc" stroke-width="1" />
<line x1="1127.5" y1="62.2" x2="1127.5" y2="321.7" stroke="#dcdcdc" stroke-width="1" />
<line x1="1143.5" y1="62.2" x2="1143.5" y2="321.7" stroke="#dcdcdc" stroke-width="1" />
<line x1="1156.5" y1="62.2" x2="1156.5" y2="321.7" stroke="#dcdcdc" stroke-width="1" />
<line x1="901.5" y1="62.2" x2="901.5" y2="321.7" stroke="#888888" stroke-width="1.15" />
<line x1="1168.5" y1="62.2" x2="1168.5" y2="321.7" stroke="#888888" stroke-width="1.15" />
<line x1="714.5" y1="94.5" x2="1249.5" y2="94.5" stroke="#888888" stroke-width="1.15" />
<line x1="714.5" y1="127.5" x2="1249.5" y2="127.5" stroke="#888888" stroke-width="1.15" />
<line x1="714.5" y1="159.5" x2="1249.5" y2="159.5" stroke="#888888" stroke-width="1.15" />
<line x1="714.5" y1="191.5" x2="1249.5" y2="191.5" stroke="#888888" stroke-width="1.15" />
<line x1="714.5" y1="224.5" x2="1249.5" y2="224.5" stroke="#888888" stroke-width="1.15" />
<line x1="714.5" y1="256.5" x2="1249.5" y2="256.5" stroke="#888888" stroke-width="1.15" />
<line x1="714.5" y1="289.5" x2="1249.5" y2="289.5" stroke="#888888" stroke-width="1.15" />
<rect x="714.5" y="62.5" width="535" height="259" fill="none" stroke="#858585" stroke-width="1.3" rx="0" />
<text transform="translate(709.0,64.7) scale(0.93,1)" font-size="13.97" fill="#1a1a1a" stroke="#1a1a1a" text-anchor="end">100</text>
<text transform="translate(709.0,97.1375) scale(0.93,1)" font-size="13.97" fill="#1a1a1a" stroke="#1a1a1a" text-anchor="end">95</text>
<text transform="translate(709.0,129.575) scale(0.93,1)" font-size="13.97" fill="#1a1a1a" stroke="#1a1a1a" text-anchor="end">90</text>
<text transform="translate(709.0,162.0125) scale(0.93,1)" font-size="13.97" fill="#1a1a1a" stroke="#1a1a1a" text-anchor="end">85</text>
<text transform="translate(709.0,194.45) scale(0.93,1)" font-size="13.97" fill="#1a1a1a" stroke="#1a1a1a" text-anchor="end">80</text>
<text transform="translate(709.0,226.8875) scale(0.93,1)" font-size="13.97" fill="#1a1a1a" stroke="#1a1a1a" text-anchor="end">75</text>
<text transform="translate(709.0,259.325) scale(0.93,1)" font-size="13.97" fill="#1a1a1a" stroke="#1a1a1a" text-anchor="end">70</text>
<text transform="translate(709.0,291.7625) scale(0.93,1)" font-size="13.97" fill="#1a1a1a" stroke="#1a1a1a" text-anchor="end">65</text>
<text transform="translate(709.0,324.2) scale(0.93,1)" font-size="13.97" fill="#1a1a1a" stroke="#1a1a1a" text-anchor="end">60</text>
<text transform="translate(1269.5,64.7) scale(0.93,1)" font-size="13.97" fill="#1a1a1a" stroke="#1a1a1a" text-anchor="middle">180</text>
<text transform="translate(1269.5,97.1375) scale(0.93,1)" font-size="13.97" fill="#1a1a1a" stroke="#1a1a1a" text-anchor="middle">135</text>
<text transform="translate(1269.5,129.575) scale(0.93,1)" font-size="13.97" fill="#1a1a1a" stroke="#1a1a1a" text-anchor="middle">90</text>
<text transform="translate(1269.5,162.0125) scale(0.93,1)" font-size="13.97" fill="#1a1a1a" stroke="#1a1a1a" text-anchor="middle">45</text>
<text transform="translate(1269.5,194.45) scale(0.93,1)" font-size="13.97" fill="#1a1a1a" stroke="#1a1a1a" text-anchor="middle">0</text>
<text transform="translate(1269.5,226.8875) scale(0.93,1)" font-size="13.97" fill="#1a1a1a" stroke="#1a1a1a" text-anchor="middle">-45</text>
<text transform="translate(1269.5,259.325) scale(0.93,1)" font-size="13.97" fill="#1a1a1a" stroke="#1a1a1a" text-anchor="middle">-90</text>
<text transform="translate(1269.5,291.7625) scale(0.93,1)" font-size="13.97" fill="#1a1a1a" stroke="#1a1a1a" text-anchor="middle">-135</text>
<text transform="translate(1269.5,324.2) scale(0.93,1)" font-size="13.97" fill="#1a1a1a" stroke="#1a1a1a" text-anchor="middle">-180</text>
<text transform="translate(714.5,337.2) scale(0.93,1)" font-size="13.97" fill="#1a1a1a" stroke="#1a1a1a" text-anchor="middle">200Hz</text>
<text transform="translate(820.9489523197701,337.2) scale(0.93,1)" font-size="13.97" fill="#1a1a1a" stroke="#1a1a1a" text-anchor="middle">500</text>
<text transform="translate(901.4744761598851,337.2) scale(0.93,1)" font-size="13.97" fill="#1a1a1a" stroke="#1a1a1a" text-anchor="middle">1k</text>
<text transform="translate(982.0,337.2) scale(0.93,1)" font-size="13.97" fill="#1a1a1a" stroke="#1a1a1a" text-anchor="middle">2k</text>
<text transform="translate(1088.4489523197701,337.2) scale(0.93,1)" font-size="13.97" fill="#1a1a1a" stroke="#1a1a1a" text-anchor="middle">5k</text>
<text transform="translate(1168.974476159885,337.2) scale(0.93,1)" font-size="13.97" fill="#1a1a1a" stroke="#1a1a1a" text-anchor="middle">10k</text>
<text transform="translate(1249.5,337.2) scale(0.93,1)" font-size="13.97" fill="#1a1a1a" stroke="#1a1a1a" text-anchor="middle">20k</text>
<text transform="translate(982.0,53.900000000000006) scale(0.93,1)" font-size="13.97" fill="#1a1a1a" stroke="#1a1a1a" text-anchor="middle">SPL</text>
<text transform="translate(716.8,58.0) scale(0.93,1)" font-size="13.97" fill="#1a1a1a" stroke="#1a1a1a" text-anchor="start">dB</text>
<text transform="translate(1246.5,58.0) scale(0.93,1)" font-size="13.97" fill="#1a1a1a" stroke="#1a1a1a" text-anchor="end">deg</text>
<clipPath id="c71462"><rect x="714.5" y="62.2" width="535.0" height="259.5"/></clipPath>
<g clip-path="url(#c71462)">
<path d="M715.8,114.0 C718.5,113.8 724.3,112.4 731.9,112.6 C739.5,112.8 753.8,114.6 761.1,115.1 C768.4,115.6 770.1,116.1 775.7,115.8 C781.3,115.5 787.2,115.1 794.7,113.3 C802.2,111.5 814.4,106.6 821.0,105.0 C827.6,103.4 828.1,103.5 834.2,103.5 C840.3,103.5 850.0,105.3 857.5,105.0 C865.0,104.7 872.6,101.7 879.4,101.6 C886.2,101.5 892.5,104.7 898.4,104.6 C904.2,104.5 909.6,101.2 914.5,100.9 C919.4,100.7 923.0,103.7 927.6,103.1 C932.2,102.5 937.2,97.1 942.3,97.2 C947.4,97.3 953.7,101.5 958.3,103.8 C962.9,106.1 966.1,110.1 970.0,110.8 C973.9,111.5 977.8,108.6 981.5,107.7 C985.2,106.8 988.7,105.8 992.3,105.4 C995.9,105.0 999.8,105.1 1003.1,105.4 C1006.4,105.7 1008.7,107.4 1012.3,107.4 C1015.9,107.4 1020.7,105.4 1024.6,105.4 C1028.4,105.4 1032.2,106.5 1035.4,107.4 C1038.6,108.4 1040.7,111.4 1043.9,111.1 C1047.1,110.8 1051.4,106.9 1054.6,105.4 C1057.8,103.9 1059.9,101.9 1063.1,102.3 C1066.3,102.7 1069.5,108.3 1073.9,108.0 C1078.3,107.7 1086.0,101.4 1089.3,100.3 C1092.6,99.2 1092.0,99.8 1093.9,101.6 C1095.8,103.3 1097.7,111.1 1100.8,110.8 C1103.9,110.5 1109.2,100.7 1112.4,99.7 C1115.6,98.7 1118.4,103.8 1120.0,104.6 C1121.6,105.4 1120.6,105.9 1122.2,104.6 C1123.8,103.2 1126.7,97.8 1129.5,96.5 C1132.3,95.2 1136.9,96.3 1139.0,96.5 C1141.1,96.7 1140.6,97.6 1141.9,97.6 C1143.2,97.5 1145.3,96.4 1147.0,96.2 C1148.7,96.0 1150.4,96.6 1152.1,96.2 C1153.8,95.8 1155.8,94.2 1157.3,94.0 C1158.8,93.8 1159.5,94.2 1160.9,95.1 C1162.3,95.9 1164.2,99.3 1165.7,99.1 C1167.2,98.9 1168.2,95.3 1169.7,94.0 C1171.2,92.7 1173.3,91.3 1174.8,91.0 C1176.2,90.7 1176.9,92.3 1178.4,92.1 C1179.9,91.9 1181.6,90.8 1183.6,90.0 C1185.5,89.2 1188.5,88.7 1190.1,87.4 C1191.7,86.1 1191.8,82.9 1193.0,82.3 C1194.2,81.7 1195.7,84.2 1197.4,83.7 C1199.1,83.2 1201.7,79.9 1203.3,79.4 C1204.9,78.9 1205.8,81.4 1207.3,80.8 C1208.8,80.2 1210.2,75.8 1212.0,75.7 C1213.8,75.7 1216.2,78.7 1217.9,80.5 C1219.6,82.3 1221.0,85.7 1222.3,86.7 C1223.6,87.7 1224.7,85.8 1225.9,86.3 C1227.1,86.8 1228.4,89.3 1229.6,89.6 C1230.8,89.9 1232.0,87.9 1233.2,88.1 C1234.4,88.3 1235.8,90.5 1236.9,90.7 C1238.0,91.0 1238.6,89.3 1239.8,89.6 C1241.0,89.9 1242.7,92.1 1244.2,92.5 C1245.7,92.9 1247.7,93.1 1248.6,92.1 C1249.5,91.1 1249.3,88.3 1249.7,86.3 C1250.1,84.3 1250.8,81.0 1251.0,80.0" stroke="#5c5c5c" stroke-width="2.8" fill="none" stroke-linejoin="round" stroke-linecap="round" />
<path d="M715.8,114.0 C718.5,113.8 724.3,112.4 731.9,112.6 C739.5,112.8 753.8,114.6 761.1,115.1 C768.4,115.6 770.1,116.1 775.7,115.8 C781.3,115.5 787.2,115.1 794.7,113.3 C802.2,111.5 814.4,106.6 821.0,105.0 C827.6,103.4 828.1,103.5 834.2,103.5 C840.3,103.5 850.0,105.3 857.5,105.0 C865.0,104.7 872.6,101.7 879.4,101.6 C886.2,101.5 892.5,104.7 898.4,104.6 C904.2,104.5 909.6,101.2 914.5,100.9 C919.4,100.7 923.0,103.7 927.6,103.1 C932.2,102.5 937.2,97.0 942.3,97.2 C947.4,97.5 955.6,103.4 958.3,104.6" stroke="#c9242c" stroke-width="2.2" fill="none" stroke-linejoin="round" stroke-linecap="round" />
<path d="M958.3,104.6 C960.4,106.4 966.7,113.0 970.8,115.4 C974.9,117.8 978.0,117.5 983.1,119.2 C988.2,120.9 998.0,124.0 1001.6,125.4 C1005.2,126.8 1001.8,124.5 1004.6,127.7 C1007.4,130.9 1014.4,140.2 1018.5,144.6 C1022.6,149.0 1025.5,150.6 1029.3,153.9 C1033.1,157.2 1037.9,161.8 1041.6,164.6 C1045.3,167.4 1048.8,170.4 1051.6,170.8 C1054.4,171.2 1055.8,166.5 1058.5,167.0 C1061.2,167.5 1064.2,169.5 1067.7,173.9 C1071.2,178.3 1076.8,188.3 1079.8,193.2 C1082.8,198.1 1083.2,200.9 1085.7,203.5 C1088.2,206.1 1091.8,205.2 1094.5,208.6 C1097.2,212.0 1100.1,220.0 1101.8,224.0 C1103.5,228.0 1103.7,232.2 1104.8,232.8 C1105.9,233.4 1106.5,225.8 1108.4,227.7 C1110.4,229.6 1114.7,239.7 1116.5,244.5 C1118.3,249.3 1117.9,249.9 1119.4,256.3 C1120.9,262.7 1124.0,277.2 1125.3,282.7 C1126.6,288.2 1126.4,288.2 1127.5,289.3 C1128.6,290.4 1130.1,286.2 1131.9,289.3 C1133.7,292.4 1136.4,302.7 1138.5,307.6 C1140.6,312.5 1142.6,316.3 1144.4,318.6 C1146.2,320.9 1147.7,320.3 1149.5,321.5 C1151.3,322.7 1154.1,325.2 1155.0,326.0" stroke="#ec3a40" stroke-width="1.5" fill="none" stroke-linejoin="round" stroke-linecap="round" />
<path d="M938.0,326.0 C938.4,325.2 938.4,325.6 940.5,321.5 C942.6,317.4 948.2,307.4 950.8,301.7 C953.4,295.9 953.4,294.6 955.9,287.0 C958.4,279.4 962.0,267.1 965.5,256.3 C969.0,245.6 974.0,232.3 977.2,222.5 C980.4,212.7 982.0,204.2 984.5,197.6 C987.0,191.0 989.0,187.0 991.9,182.9 C994.8,178.8 998.5,176.9 1001.6,173.1 C1004.8,169.3 1007.5,165.2 1010.8,160.0 C1014.1,154.8 1018.5,145.9 1021.6,141.6 C1024.7,137.2 1026.5,135.7 1029.3,133.9 C1032.1,132.1 1035.7,131.5 1038.5,130.8 C1041.3,130.2 1043.4,132.2 1046.2,130.0 C1049.0,127.8 1052.6,120.4 1055.4,117.7 C1058.2,115.0 1060.1,113.7 1063.1,113.9 C1066.0,114.2 1070.5,118.7 1073.1,119.2 C1075.7,119.7 1075.8,119.2 1078.5,116.9 C1081.2,114.6 1087.5,107.3 1089.3,105.4" stroke="#3d9a48" stroke-width="1.5" fill="none" stroke-linejoin="round" stroke-linecap="round" />
<path d="M1089.3,105.4 C1090.1,105.5 1092.0,104.3 1093.9,106.2 C1095.8,108.1 1098.2,117.2 1100.8,116.9 C1103.4,116.6 1106.1,106.6 1109.3,104.6 C1112.5,102.5 1117.8,104.6 1120.0,104.6 C1122.2,104.6 1120.6,105.9 1122.2,104.6 C1123.8,103.2 1126.7,97.8 1129.5,96.5 C1132.3,95.2 1136.9,96.3 1139.0,96.5 C1141.1,96.7 1140.6,97.6 1141.9,97.6 C1143.2,97.5 1145.3,96.4 1147.0,96.2 C1148.7,96.0 1150.4,96.6 1152.1,96.2 C1153.8,95.8 1155.8,94.2 1157.3,94.0 C1158.8,93.8 1159.5,94.2 1160.9,95.1 C1162.3,95.9 1164.2,99.3 1165.7,99.1 C1167.2,98.9 1168.2,95.3 1169.7,94.0 C1171.2,92.7 1173.3,91.3 1174.8,91.0 C1176.2,90.7 1176.9,92.3 1178.4,92.1 C1179.9,91.9 1181.6,90.8 1183.6,90.0 C1185.5,89.2 1188.5,88.7 1190.1,87.4 C1191.7,86.1 1191.8,82.9 1193.0,82.3 C1194.2,81.7 1195.7,84.2 1197.4,83.7 C1199.1,83.2 1201.7,79.9 1203.3,79.4 C1204.9,78.9 1205.8,81.4 1207.3,80.8 C1208.8,80.2 1210.2,75.8 1212.0,75.7 C1213.8,75.7 1216.2,78.7 1217.9,80.5 C1219.6,82.3 1221.0,85.7 1222.3,86.7 C1223.6,87.7 1224.7,85.8 1225.9,86.3 C1227.1,86.8 1228.4,89.3 1229.6,89.6 C1230.8,89.9 1232.0,87.9 1233.2,88.1 C1234.4,88.3 1235.8,90.5 1236.9,90.7 C1238.0,91.0 1238.6,89.3 1239.8,89.6 C1241.0,89.9 1242.7,92.1 1244.2,92.5 C1245.7,92.9 1247.7,93.1 1248.6,92.1 C1249.5,91.1 1249.3,88.3 1249.7,86.3 C1250.1,84.3 1250.8,81.0 1251.0,80.0" stroke="#3a7d45" stroke-width="2.4" fill="none" stroke-linejoin="round" stroke-linecap="round" />
</g>
<rect x="1296.9" y="40" width="616" height="304" fill="#ffffff" rx="0" />
<line x1="1337" y1="75.5" x2="1873" y2="75.5" stroke="#d9d9d9" stroke-width="1" />
<line x1="1337" y1="88.5" x2="1873" y2="88.5" stroke="#d9d9d9" stroke-width="1" />
<line x1="1337" y1="101.5" x2="1873" y2="101.5" stroke="#d9d9d9" stroke-width="1" />
<line x1="1337" y1="114.5" x2="1873" y2="114.5" stroke="#d9d9d9" stroke-width="1" />
<line x1="1337" y1="140.5" x2="1873" y2="140.5" stroke="#d9d9d9" stroke-width="1" />
<line x1="1337" y1="153.5" x2="1873" y2="153.5" stroke="#d9d9d9" stroke-width="1" />
<line x1="1337" y1="166.5" x2="1873" y2="166.5" stroke="#d9d9d9" stroke-width="1" />
<line x1="1337" y1="178.5" x2="1873" y2="178.5" stroke="#d9d9d9" stroke-width="1" />
<line x1="1337" y1="204.5" x2="1873" y2="204.5" stroke="#d9d9d9" stroke-width="1" />
<line x1="1337" y1="217.5" x2="1873" y2="217.5" stroke="#d9d9d9" stroke-width="1" />
<line x1="1337" y1="230.5" x2="1873" y2="230.5" stroke="#d9d9d9" stroke-width="1" />
<line x1="1337" y1="243.5" x2="1873" y2="243.5" stroke="#d9d9d9" stroke-width="1" />
<line x1="1337" y1="269.5" x2="1873" y2="269.5" stroke="#d9d9d9" stroke-width="1" />
<line x1="1337" y1="282.5" x2="1873" y2="282.5" stroke="#d9d9d9" stroke-width="1" />
<line x1="1337" y1="295.5" x2="1873" y2="295.5" stroke="#d9d9d9" stroke-width="1" />
<line x1="1337" y1="308.5" x2="1873" y2="308.5" stroke="#d9d9d9" stroke-width="1" />
<line x1="1384.5" y1="62.2" x2="1384.5" y2="321.7" stroke="#dcdcdc" stroke-width="1" />
<line x1="1417.5" y1="62.2" x2="1417.5" y2="321.7" stroke="#dcdcdc" stroke-width="1" />
<line x1="1443.5" y1="62.2" x2="1443.5" y2="321.7" stroke="#dcdcdc" stroke-width="1" />
<line x1="1464.5" y1="62.2" x2="1464.5" y2="321.7" stroke="#dcdcdc" stroke-width="1" />
<line x1="1482.5" y1="62.2" x2="1482.5" y2="321.7" stroke="#dcdcdc" stroke-width="1" />
<line x1="1498.5" y1="62.2" x2="1498.5" y2="321.7" stroke="#dcdcdc" stroke-width="1" />
<line x1="1512.5" y1="62.2" x2="1512.5" y2="321.7" stroke="#dcdcdc" stroke-width="1" />
<line x1="1605.5" y1="62.2" x2="1605.5" y2="321.7" stroke="#dcdcdc" stroke-width="1" />
<line x1="1652.5" y1="62.2" x2="1652.5" y2="321.7" stroke="#dcdcdc" stroke-width="1" />
<line x1="1685.5" y1="62.2" x2="1685.5" y2="321.7" stroke="#dcdcdc" stroke-width="1" />
<line x1="1711.5" y1="62.2" x2="1711.5" y2="321.7" stroke="#dcdcdc" stroke-width="1" />
<line x1="1732.5" y1="62.2" x2="1732.5" y2="321.7" stroke="#dcdcdc" stroke-width="1" />
<line x1="1750.5" y1="62.2" x2="1750.5" y2="321.7" stroke="#dcdcdc" stroke-width="1" />
<line x1="1766.5" y1="62.2" x2="1766.5" y2="321.7" stroke="#dcdcdc" stroke-width="1" />
<line x1="1780.5" y1="62.2" x2="1780.5" y2="321.7" stroke="#dcdcdc" stroke-width="1" />
<line x1="1524.5" y1="62.2" x2="1524.5" y2="321.7" stroke="#888888" stroke-width="1.15" />
<line x1="1792.5" y1="62.2" x2="1792.5" y2="321.7" stroke="#888888" stroke-width="1.15" />
<line x1="1337" y1="127.5" x2="1873" y2="127.5" stroke="#888888" stroke-width="1.15" />
<line x1="1337" y1="191.5" x2="1873" y2="191.5" stroke="#888888" stroke-width="1.15" />
<line x1="1337" y1="256.5" x2="1873" y2="256.5" stroke="#888888" stroke-width="1.15" />
<rect x="1337.5" y="62.5" width="536" height="259" fill="none" stroke="#858585" stroke-width="1.3" rx="0" />
<text transform="translate(1331.5,64.7) scale(0.93,1)" font-size="13.97" fill="#1a1a1a" stroke="#1a1a1a" text-anchor="end">15</text>
<text transform="translate(1331.5,129.575) scale(0.93,1)" font-size="13.97" fill="#1a1a1a" stroke="#1a1a1a" text-anchor="end">10</text>
<text transform="translate(1331.5,194.45) scale(0.93,1)" font-size="13.97" fill="#1a1a1a" stroke="#1a1a1a" text-anchor="end">5</text>
<text transform="translate(1331.5,259.325) scale(0.93,1)" font-size="13.97" fill="#1a1a1a" stroke="#1a1a1a" text-anchor="end">0</text>
<text transform="translate(1331.5,324.2) scale(0.93,1)" font-size="13.97" fill="#1a1a1a" stroke="#1a1a1a" text-anchor="end">-5</text>
<text transform="translate(1893,64.7) scale(0.93,1)" font-size="13.97" fill="#1a1a1a" stroke="#1a1a1a" text-anchor="middle">180</text>
<text transform="translate(1893,129.575) scale(0.93,1)" font-size="13.97" fill="#1a1a1a" stroke="#1a1a1a" text-anchor="middle">90</text>
<text transform="translate(1893,194.45) scale(0.93,1)" font-size="13.97" fill="#1a1a1a" stroke="#1a1a1a" text-anchor="middle">0</text>
<text transform="translate(1893,259.325) scale(0.93,1)" font-size="13.97" fill="#1a1a1a" stroke="#1a1a1a" text-anchor="middle">-90</text>
<text transform="translate(1893,324.2) scale(0.93,1)" font-size="13.97" fill="#1a1a1a" stroke="#1a1a1a" text-anchor="middle">-180</text>
<text transform="translate(1337.0,337.2) scale(0.93,1)" font-size="13.97" fill="#1a1a1a" stroke="#1a1a1a" text-anchor="middle">200Hz</text>
<text transform="translate(1443.647922324106,337.2) scale(0.93,1)" font-size="13.97" fill="#1a1a1a" stroke="#1a1a1a" text-anchor="middle">500</text>
<text transform="translate(1524.3239611620531,337.2) scale(0.93,1)" font-size="13.97" fill="#1a1a1a" stroke="#1a1a1a" text-anchor="middle">1k</text>
<text transform="translate(1605.0,337.2) scale(0.93,1)" font-size="13.97" fill="#1a1a1a" stroke="#1a1a1a" text-anchor="middle">2k</text>
<text transform="translate(1711.647922324106,337.2) scale(0.93,1)" font-size="13.97" fill="#1a1a1a" stroke="#1a1a1a" text-anchor="middle">5k</text>
<text transform="translate(1792.323961162053,337.2) scale(0.93,1)" font-size="13.97" fill="#1a1a1a" stroke="#1a1a1a" text-anchor="middle">10k</text>
<text transform="translate(1873.0,337.2) scale(0.93,1)" font-size="13.97" fill="#1a1a1a" stroke="#1a1a1a" text-anchor="middle">20k</text>
<text transform="translate(1605.0,53.900000000000006) scale(0.93,1)" font-size="13.97" fill="#1a1a1a" stroke="#1a1a1a" text-anchor="middle" textLength="81.4" lengthAdjust="spacingAndGlyphs">GD &amp; Phase</text>
<text transform="translate(1339.3,58.0) scale(0.93,1)" font-size="13.97" fill="#1a1a1a" stroke="#1a1a1a" text-anchor="start">ms</text>
<text transform="translate(1870,58.0) scale(0.93,1)" font-size="13.97" fill="#1a1a1a" stroke="#1a1a1a" text-anchor="end">deg</text>
<clipPath id="c133762"><rect x="1337" y="62.2" width="536" height="259.5"/></clipPath>
<g clip-path="url(#c133762)">
<path d="M1337.6,247.8 C1345.4,248.9 1372.2,253.1 1384.6,254.3 C1397.0,255.5 1401.9,255.3 1411.9,255.1 C1421.9,254.9 1434.1,253.1 1444.6,253.2 C1455.1,253.2 1448.8,255.1 1474.7,255.4 C1500.6,255.8 1562.5,255.2 1600.0,255.3 C1637.5,255.4 1654.3,255.6 1700.0,255.8 C1745.7,256.0 1845.0,256.5 1874.0,256.6" stroke="#606060" stroke-width="2.6" fill="none" stroke-linejoin="round" stroke-linecap="round" />
<path d="M1337.6,169.7 C1343.6,171.2 1360.4,176.3 1373.7,178.7 C1387.0,181.1 1406.4,182.4 1417.3,184.2 C1428.2,186.0 1431.0,187.1 1439.2,189.6 C1447.4,192.1 1457.4,196.5 1466.5,199.2 C1475.6,201.9 1484.2,203.5 1493.8,206.0 C1503.3,208.5 1513.8,211.0 1523.8,214.2 C1533.8,217.4 1546.1,221.2 1553.8,225.1 C1561.5,229.0 1564.3,233.3 1570.2,237.4 C1576.1,241.5 1584.3,247.1 1589.3,249.7 C1594.3,252.3 1595.4,251.4 1600.0,253.0 C1604.6,254.6 1611.1,256.2 1616.7,259.4 C1622.3,262.5 1627.9,269.2 1633.4,271.9 C1639.0,274.6 1644.5,274.6 1650.0,275.5 C1655.5,276.4 1662.0,277.6 1666.7,277.5 C1671.4,277.4 1675.1,274.7 1677.9,274.7 C1680.7,274.7 1680.6,275.2 1683.4,277.5 C1686.2,279.8 1689.9,285.1 1694.5,288.6 C1699.1,292.1 1706.5,294.8 1711.2,298.3 C1715.9,301.8 1719.2,307.3 1722.4,309.4 C1725.7,311.5 1728.5,309.2 1730.7,310.8 C1732.9,312.4 1734.6,317.8 1735.4,319.2" stroke="#e8373d" stroke-width="1.4" fill="none" stroke-linejoin="round" stroke-linecap="round" />
<path d="M1436.4,201.1 C1437.3,201.0 1437.8,201.6 1441.9,200.6 C1446.0,199.6 1453.3,193.8 1461.0,195.1 C1468.7,196.4 1481.0,206.3 1488.3,208.7 C1495.6,211.1 1498.8,208.5 1504.7,209.6 C1510.6,210.7 1517.9,212.4 1523.8,215.0 C1529.7,217.6 1535.7,223.7 1540.2,225.1 C1544.8,226.5 1546.1,223.3 1551.1,223.2 C1556.1,223.1 1564.8,225.0 1570.2,224.6 C1575.7,224.2 1579.7,220.4 1583.8,220.5 C1587.9,220.6 1592.0,223.5 1594.7,225.1 C1597.4,226.7 1597.3,226.6 1600.0,230.2 C1602.7,233.8 1606.5,240.4 1611.1,246.9 C1615.7,253.4 1622.7,263.1 1627.8,269.1 C1632.9,275.1 1637.1,277.4 1641.7,283.0 C1646.3,288.6 1651.4,297.9 1655.6,302.5 C1659.8,307.1 1662.5,307.8 1666.7,310.8 C1670.9,313.8 1678.3,319.0 1680.6,320.6" stroke="#3d9a48" stroke-width="1.4" fill="none" stroke-linejoin="round" stroke-linecap="round" />
</g>
<g>
<polyline points="1680.6,320.6 1682.9,64.7" stroke="#3d9a48" stroke-width="1.4" fill="none" stroke-linejoin="round" stroke-linecap="round" />
</g>
<path d="M1682.9,64.7 C1684.4,65.9 1688.2,70.3 1691.8,71.7 C1695.4,73.1 1699.7,70.1 1704.3,73.1 C1708.9,76.1 1715.4,87.3 1719.6,89.8 C1723.8,92.2 1726.1,86.7 1729.3,87.8 C1732.5,88.9 1735.5,94.5 1739.0,96.2 C1742.5,97.9 1746.0,96.2 1750.2,98.1 C1754.4,100.0 1758.1,104.7 1764.1,107.8 C1770.1,110.9 1781.4,115.5 1786.3,116.7 C1791.2,117.9 1789.1,112.8 1793.3,114.8 C1797.5,116.8 1805.5,124.1 1811.3,128.7 C1817.1,133.3 1822.9,137.5 1828.0,142.6 C1833.1,147.7 1836.6,155.1 1841.9,159.3 C1847.2,163.5 1854.9,166.7 1860.0,167.6 C1865.1,168.5 1870.0,165.4 1872.5,164.8 C1875.0,164.2 1874.6,164.1 1875.0,164.0" stroke="#3d9a48" stroke-width="1.4" fill="none" stroke-linejoin="round" stroke-linecap="round" />
<polyline points="1735.6,319.5 1736.8,64.7" stroke="#e8373d" stroke-width="1.4" fill="none" stroke-linejoin="round" stroke-linecap="round" />
<path d="M1736.8,64.7 C1737.9,66.3 1740.5,74.5 1743.2,74.5 C1745.9,74.5 1750.0,65.6 1753.0,64.7 C1756.0,63.8 1758.3,68.9 1761.3,68.9 C1764.3,68.9 1768.2,64.2 1771.0,64.7 C1773.8,65.2 1775.5,67.8 1778.0,71.7 C1780.5,75.7 1783.8,86.3 1786.3,88.4 C1788.8,90.5 1791.0,83.7 1793.3,84.2 C1795.6,84.7 1797.2,86.8 1800.2,91.2 C1803.2,95.6 1807.8,103.6 1811.3,110.6 C1814.8,117.5 1819.5,129.2 1821.1,132.9" stroke="#e8373d" stroke-width="1.4" fill="none" stroke-linejoin="round" stroke-linecap="round" />
<polyline points="1821.1,132.9 1826.6,78.6 1828.0,312.2 1829.4,294.2" stroke="#e8373d" stroke-width="1.4" fill="none" stroke-linejoin="round" stroke-linecap="round" />
<rect x="674.5" y="351.5" width="615" height="304.5" fill="#ffffff" rx="0" />
<line x1="714.5" y1="380.5" x2="1249.5" y2="380.5" stroke="#d9d9d9" stroke-width="1" />
<line x1="714.5" y1="386.5" x2="1249.5" y2="386.5" stroke="#d9d9d9" stroke-width="1" />
<line x1="714.5" y1="393.5" x2="1249.5" y2="393.5" stroke="#d9d9d9" stroke-width="1" />
<line x1="714.5" y1="399.5" x2="1249.5" y2="399.5" stroke="#d9d9d9" stroke-width="1" />
<line x1="714.5" y1="412.5" x2="1249.5" y2="412.5" stroke="#d9d9d9" stroke-width="1" />
<line x1="714.5" y1="418.5" x2="1249.5" y2="418.5" stroke="#d9d9d9" stroke-width="1" />
<line x1="714.5" y1="425.5" x2="1249.5" y2="425.5" stroke="#d9d9d9" stroke-width="1" />
<line x1="714.5" y1="431.5" x2="1249.5" y2="431.5" stroke="#d9d9d9" stroke-width="1" />
<line x1="714.5" y1="444.5" x2="1249.5" y2="444.5" stroke="#d9d9d9" stroke-width="1" />
<line x1="714.5" y1="451.5" x2="1249.5" y2="451.5" stroke="#d9d9d9" stroke-width="1" />
<line x1="714.5" y1="457.5" x2="1249.5" y2="457.5" stroke="#d9d9d9" stroke-width="1" />
<line x1="714.5" y1="464.5" x2="1249.5" y2="464.5" stroke="#d9d9d9" stroke-width="1" />
<line x1="714.5" y1="477.5" x2="1249.5" y2="477.5" stroke="#d9d9d9" stroke-width="1" />
<line x1="714.5" y1="483.5" x2="1249.5" y2="483.5" stroke="#d9d9d9" stroke-width="1" />
<line x1="714.5" y1="490.5" x2="1249.5" y2="490.5" stroke="#d9d9d9" stroke-width="1" />
<line x1="714.5" y1="496.5" x2="1249.5" y2="496.5" stroke="#d9d9d9" stroke-width="1" />
<line x1="714.5" y1="509.5" x2="1249.5" y2="509.5" stroke="#d9d9d9" stroke-width="1" />
<line x1="714.5" y1="516.5" x2="1249.5" y2="516.5" stroke="#d9d9d9" stroke-width="1" />
<line x1="714.5" y1="522.5" x2="1249.5" y2="522.5" stroke="#d9d9d9" stroke-width="1" />
<line x1="714.5" y1="529.5" x2="1249.5" y2="529.5" stroke="#d9d9d9" stroke-width="1" />
<line x1="714.5" y1="541.5" x2="1249.5" y2="541.5" stroke="#d9d9d9" stroke-width="1" />
<line x1="714.5" y1="548.5" x2="1249.5" y2="548.5" stroke="#d9d9d9" stroke-width="1" />
<line x1="714.5" y1="554.5" x2="1249.5" y2="554.5" stroke="#d9d9d9" stroke-width="1" />
<line x1="714.5" y1="561.5" x2="1249.5" y2="561.5" stroke="#d9d9d9" stroke-width="1" />
<line x1="714.5" y1="574.5" x2="1249.5" y2="574.5" stroke="#d9d9d9" stroke-width="1" />
<line x1="714.5" y1="580.5" x2="1249.5" y2="580.5" stroke="#d9d9d9" stroke-width="1" />
<line x1="714.5" y1="587.5" x2="1249.5" y2="587.5" stroke="#d9d9d9" stroke-width="1" />
<line x1="714.5" y1="593.5" x2="1249.5" y2="593.5" stroke="#d9d9d9" stroke-width="1" />
<line x1="714.5" y1="606.5" x2="1249.5" y2="606.5" stroke="#d9d9d9" stroke-width="1" />
<line x1="714.5" y1="613.5" x2="1249.5" y2="613.5" stroke="#d9d9d9" stroke-width="1" />
<line x1="714.5" y1="619.5" x2="1249.5" y2="619.5" stroke="#d9d9d9" stroke-width="1" />
<line x1="714.5" y1="626.5" x2="1249.5" y2="626.5" stroke="#d9d9d9" stroke-width="1" />
<line x1="761.5" y1="373.6" x2="761.5" y2="632.6" stroke="#dcdcdc" stroke-width="1" />
<line x1="795.5" y1="373.6" x2="795.5" y2="632.6" stroke="#dcdcdc" stroke-width="1" />
<line x1="820.5" y1="373.6" x2="820.5" y2="632.6" stroke="#dcdcdc" stroke-width="1" />
<line x1="842.5" y1="373.6" x2="842.5" y2="632.6" stroke="#dcdcdc" stroke-width="1" />
<line x1="860.5" y1="373.6" x2="860.5" y2="632.6" stroke="#dcdcdc" stroke-width="1" />
<line x1="875.5" y1="373.6" x2="875.5" y2="632.6" stroke="#dcdcdc" stroke-width="1" />
<line x1="889.5" y1="373.6" x2="889.5" y2="632.6" stroke="#dcdcdc" stroke-width="1" />
<line x1="982.5" y1="373.6" x2="982.5" y2="632.6" stroke="#dcdcdc" stroke-width="1" />
<line x1="1029.5" y1="373.6" x2="1029.5" y2="632.6" stroke="#dcdcdc" stroke-width="1" />
<line x1="1062.5" y1="373.6" x2="1062.5" y2="632.6" stroke="#dcdcdc" stroke-width="1" />
<line x1="1088.5" y1="373.6" x2="1088.5" y2="632.6" stroke="#dcdcdc" stroke-width="1" />
<line x1="1109.5" y1="373.6" x2="1109.5" y2="632.6" stroke="#dcdcdc" stroke-width="1" />
<line x1="1127.5" y1="373.6" x2="1127.5" y2="632.6" stroke="#dcdcdc" stroke-width="1" />
<line x1="1143.5" y1="373.6" x2="1143.5" y2="632.6" stroke="#dcdcdc" stroke-width="1" />
<line x1="1156.5" y1="373.6" x2="1156.5" y2="632.6" stroke="#dcdcdc" stroke-width="1" />
<line x1="901.5" y1="373.6" x2="901.5" y2="632.6" stroke="#888888" stroke-width="1.15" />
<line x1="1168.5" y1="373.6" x2="1168.5" y2="632.6" stroke="#888888" stroke-width="1.15" />
<line x1="714.5" y1="405.5" x2="1249.5" y2="405.5" stroke="#888888" stroke-width="1.15" />
<line x1="714.5" y1="438.5" x2="1249.5" y2="438.5" stroke="#888888" stroke-width="1.15" />
<line x1="714.5" y1="470.5" x2="1249.5" y2="470.5" stroke="#888888" stroke-width="1.15" />
<line x1="714.5" y1="503.5" x2="1249.5" y2="503.5" stroke="#888888" stroke-width="1.15" />
<line x1="714.5" y1="535.5" x2="1249.5" y2="535.5" stroke="#888888" stroke-width="1.15" />
<line x1="714.5" y1="567.5" x2="1249.5" y2="567.5" stroke="#888888" stroke-width="1.15" />
<line x1="714.5" y1="600.5" x2="1249.5" y2="600.5" stroke="#888888" stroke-width="1.15" />
<rect x="714.5" y="373.5" width="535" height="259" fill="none" stroke="#858585" stroke-width="1.3" rx="0" />
<text transform="translate(709.0,376.1) scale(0.93,1)" font-size="13.97" fill="#1a1a1a" stroke="#1a1a1a" text-anchor="end">100</text>
<text transform="translate(709.0,408.475) scale(0.93,1)" font-size="13.97" fill="#1a1a1a" stroke="#1a1a1a" text-anchor="end">95</text>
<text transform="translate(709.0,440.85) scale(0.93,1)" font-size="13.97" fill="#1a1a1a" stroke="#1a1a1a" text-anchor="end">90</text>
<text transform="translate(709.0,473.225) scale(0.93,1)" font-size="13.97" fill="#1a1a1a" stroke="#1a1a1a" text-anchor="end">85</text>
<text transform="translate(709.0,505.6) scale(0.93,1)" font-size="13.97" fill="#1a1a1a" stroke="#1a1a1a" text-anchor="end">80</text>
<text transform="translate(709.0,537.975) scale(0.93,1)" font-size="13.97" fill="#1a1a1a" stroke="#1a1a1a" text-anchor="end">75</text>
<text transform="translate(709.0,570.35) scale(0.93,1)" font-size="13.97" fill="#1a1a1a" stroke="#1a1a1a" text-anchor="end">70</text>
<text transform="translate(709.0,602.725) scale(0.93,1)" font-size="13.97" fill="#1a1a1a" stroke="#1a1a1a" text-anchor="end">65</text>
<text transform="translate(709.0,635.1) scale(0.93,1)" font-size="13.97" fill="#1a1a1a" stroke="#1a1a1a" text-anchor="end">60</text>
<text transform="translate(1269.5,376.1) scale(0.93,1)" font-size="13.97" fill="#1a1a1a" stroke="#1a1a1a" text-anchor="middle">35</text>
<text transform="translate(1269.5,408.475) scale(0.93,1)" font-size="13.97" fill="#1a1a1a" stroke="#1a1a1a" text-anchor="middle">30</text>
<text transform="translate(1269.5,440.85) scale(0.93,1)" font-size="13.97" fill="#1a1a1a" stroke="#1a1a1a" text-anchor="middle">25</text>
<text transform="translate(1269.5,473.225) scale(0.93,1)" font-size="13.97" fill="#1a1a1a" stroke="#1a1a1a" text-anchor="middle">20</text>
<text transform="translate(1269.5,505.6) scale(0.93,1)" font-size="13.97" fill="#1a1a1a" stroke="#1a1a1a" text-anchor="middle">15</text>
<text transform="translate(1269.5,537.975) scale(0.93,1)" font-size="13.97" fill="#1a1a1a" stroke="#1a1a1a" text-anchor="middle">10</text>
<text transform="translate(1269.5,570.35) scale(0.93,1)" font-size="13.97" fill="#1a1a1a" stroke="#1a1a1a" text-anchor="middle">5</text>
<text transform="translate(1269.5,602.725) scale(0.93,1)" font-size="13.97" fill="#1a1a1a" stroke="#1a1a1a" text-anchor="middle">0</text>
<text transform="translate(1269.5,635.1) scale(0.93,1)" font-size="13.97" fill="#1a1a1a" stroke="#1a1a1a" text-anchor="middle">-5</text>
<text transform="translate(714.5,648.1) scale(0.93,1)" font-size="13.97" fill="#1a1a1a" stroke="#1a1a1a" text-anchor="middle">200Hz</text>
<text transform="translate(820.9489523197701,648.1) scale(0.93,1)" font-size="13.97" fill="#1a1a1a" stroke="#1a1a1a" text-anchor="middle">500</text>
<text transform="translate(901.4744761598851,648.1) scale(0.93,1)" font-size="13.97" fill="#1a1a1a" stroke="#1a1a1a" text-anchor="middle">1k</text>
<text transform="translate(982.0,648.1) scale(0.93,1)" font-size="13.97" fill="#1a1a1a" stroke="#1a1a1a" text-anchor="middle">2k</text>
<text transform="translate(1088.4489523197701,648.1) scale(0.93,1)" font-size="13.97" fill="#1a1a1a" stroke="#1a1a1a" text-anchor="middle">5k</text>
<text transform="translate(1168.974476159885,648.1) scale(0.93,1)" font-size="13.97" fill="#1a1a1a" stroke="#1a1a1a" text-anchor="middle">10k</text>
<text transform="translate(1249.5,648.1) scale(0.93,1)" font-size="13.97" fill="#1a1a1a" stroke="#1a1a1a" text-anchor="middle">20k</text>
<text transform="translate(982.0,365.3) scale(0.93,1)" font-size="13.97" fill="#1a1a1a" stroke="#1a1a1a" text-anchor="middle" textLength="72.7" lengthAdjust="spacingAndGlyphs">Power &amp; DI</text>
<text transform="translate(716.8,369.40000000000003) scale(0.93,1)" font-size="13.97" fill="#1a1a1a" stroke="#1a1a1a" text-anchor="start">dB</text>
<text transform="translate(1246.5,369.40000000000003) scale(0.93,1)" font-size="13.97" fill="#1a1a1a" stroke="#1a1a1a" text-anchor="end">dB</text>
<clipPath id="c714373"><rect x="714.5" y="373.6" width="535.0" height="259.0"/></clipPath>
<g clip-path="url(#c714373)">
<path d="M715.5,425.4 C718.2,425.1 725.4,423.7 731.8,423.8 C738.2,423.9 746.4,425.4 753.7,426.0 C761.0,426.6 769.1,427.5 775.5,427.3 C781.9,427.1 784.6,426.5 791.9,424.6 C799.2,422.7 811.9,417.6 819.2,415.9 C826.5,414.2 829.1,414.4 835.5,414.5 C841.9,414.6 850.1,416.7 857.4,416.4 C864.7,416.1 872.4,412.9 879.2,412.8 C886.0,412.7 892.4,416.1 898.3,415.9 C904.2,415.7 909.7,411.8 914.7,411.5 C919.7,411.2 923.8,414.8 928.3,414.2 C932.8,413.6 937.0,408.2 942.0,408.2 C947.0,408.2 953.6,411.8 958.4,414.2 C963.2,416.6 967.0,421.6 970.6,422.4 C974.2,423.2 975.9,420.1 980.2,419.1 C984.5,418.1 991.0,416.4 996.4,416.4 C1001.8,416.4 1007.8,419.0 1012.8,419.1 C1017.8,419.2 1021.4,416.3 1026.4,416.9 C1031.4,417.4 1036.9,422.8 1042.8,422.4 C1048.7,421.9 1056.5,414.6 1061.9,414.2 C1067.4,413.8 1071.0,420.1 1075.5,419.7 C1080.0,419.2 1084.9,411.1 1089.2,411.5 C1093.5,411.9 1098.0,422.4 1101.5,422.4 C1105.0,422.4 1108.0,413.6 1110.0,411.7 C1112.0,409.8 1111.3,410.4 1113.2,411.0 C1115.1,411.6 1118.6,415.8 1121.4,415.2 C1124.2,414.6 1126.6,408.4 1130.2,407.2 C1133.8,406.0 1140.0,408.1 1142.9,408.1 C1145.9,408.1 1146.2,407.4 1147.9,407.2 C1149.6,407.0 1151.4,407.5 1153.0,407.2 C1154.6,406.9 1155.3,404.6 1157.4,405.1 C1159.5,405.6 1163.0,410.8 1165.6,410.4 C1168.2,410.0 1170.9,404.0 1173.2,402.8 C1175.5,401.6 1176.8,403.7 1179.5,403.1 C1182.2,402.5 1187.3,400.5 1189.6,399.0 C1191.9,397.5 1192.1,394.7 1193.4,394.0 C1194.7,393.3 1195.5,395.6 1197.2,395.0 C1198.9,394.4 1201.9,390.9 1203.6,390.4 C1205.3,389.8 1205.9,392.3 1207.3,391.7 C1208.7,391.1 1210.1,387.1 1211.8,387.0 C1213.5,386.9 1215.7,389.5 1217.5,391.4 C1219.3,393.3 1221.0,397.3 1222.5,398.4 C1224.0,399.5 1225.0,397.3 1226.3,397.8 C1227.6,398.3 1229.0,401.3 1230.1,401.5 C1231.1,401.7 1231.5,398.9 1232.6,399.0 C1233.6,399.1 1235.2,401.5 1236.4,401.8 C1237.6,402.1 1238.3,400.5 1239.6,400.9 C1240.9,401.3 1242.4,403.6 1244.0,404.1 C1245.6,404.6 1248.1,405.4 1249.1,404.1 C1250.0,402.8 1249.6,397.8 1249.7,396.5" stroke="#626262" stroke-width="2.8" fill="none" stroke-linejoin="round" stroke-linecap="round" />
<path d="M715.5,432.2 C719.1,432.1 724.6,431.2 737.3,431.4 C750.0,431.6 776.9,434.1 791.9,433.3 C806.9,432.5 819.2,427.6 827.4,426.5 C835.6,425.4 834.6,426.0 841.0,426.8 C847.4,427.6 859.2,430.9 865.6,431.4 C872.0,431.8 873.3,429.1 879.2,429.5 C885.1,429.9 893.7,432.8 901.0,433.6 C908.3,434.4 916.1,435.1 922.9,434.1 C929.7,433.2 936.5,428.2 942.0,427.9 C947.5,427.6 950.6,430.7 955.6,432.2 C960.6,433.7 966.1,437.2 972.0,436.9 C977.9,436.6 985.5,431.5 990.9,430.6 C996.3,429.7 998.2,430.2 1004.6,431.4 C1011.0,432.6 1022.3,436.6 1029.1,437.7 C1035.9,438.8 1039.8,438.9 1045.5,438.2 C1051.2,437.5 1058.2,432.5 1063.2,433.3 C1068.2,434.1 1071.2,443.1 1075.5,443.1 C1079.8,443.1 1084.9,433.4 1089.2,433.3 C1093.5,433.2 1098.0,442.0 1101.5,442.3 C1105.0,442.6 1108.0,436.3 1110.0,435.0 C1112.0,433.7 1111.8,433.8 1113.8,434.7 C1115.8,435.6 1119.3,440.4 1122.0,440.7 C1124.7,441.0 1126.9,437.0 1130.2,436.7 C1133.5,436.4 1137.6,438.1 1141.6,438.8 C1145.6,439.5 1151.0,440.7 1154.2,441.0 C1157.4,441.3 1158.7,440.1 1160.6,440.7 C1162.5,441.2 1163.9,444.3 1165.6,444.3 C1167.3,444.3 1168.6,441.1 1170.7,440.7 C1172.8,440.3 1176.2,442.3 1178.3,442.0 C1180.4,441.7 1181.5,439.0 1183.3,438.8 C1185.1,438.6 1187.1,441.2 1189.0,441.0 C1190.9,440.8 1192.7,438.1 1194.7,437.6 C1196.7,437.1 1199.0,437.8 1201.0,438.2 C1203.0,438.6 1204.9,440.6 1206.7,440.1 C1208.5,439.6 1210.2,435.7 1211.8,435.4 C1213.4,435.1 1214.6,436.0 1216.2,438.2 C1217.8,440.4 1219.8,446.4 1221.3,448.3 C1222.8,450.2 1223.3,449.0 1225.0,449.8 C1226.7,450.6 1229.5,452.4 1231.4,453.4 C1233.3,454.4 1234.3,454.8 1236.4,455.9 C1238.5,456.9 1241.9,458.6 1244.0,459.7 C1246.1,460.8 1248.1,462.6 1249.1,462.2 C1250.0,461.8 1249.6,458.0 1249.7,457.2" stroke="#8cc43c" stroke-width="2.8" fill="none" stroke-linejoin="round" stroke-linecap="round" />
<path d="M715.5,435.0 C720.0,434.9 730.1,433.8 742.8,434.1 C755.5,434.4 776.4,437.5 791.9,436.9 C807.4,436.3 823.2,430.6 835.5,430.6 C847.8,430.6 858.3,436.0 865.6,436.9 C872.9,437.8 873.3,435.6 879.2,436.0 C885.1,436.4 893.5,438.6 901.0,439.6 C908.5,440.7 917.4,442.9 924.2,442.3 C931.0,441.7 934.0,435.9 942.0,436.0 C950.0,436.1 963.9,442.8 972.0,443.1 C980.1,443.4 985.0,438.3 990.9,437.7 C996.8,437.1 1000.2,437.9 1007.3,439.6 C1014.3,441.3 1024.1,448.1 1033.2,447.8 C1042.3,447.5 1055.1,437.2 1061.9,437.7 C1068.7,438.1 1069.7,449.9 1074.2,450.5 C1078.8,451.1 1084.7,441.4 1089.2,441.5 C1093.8,441.6 1098.0,450.6 1101.5,451.1 C1105.0,451.6 1108.2,445.6 1110.0,444.5 C1111.8,443.4 1110.4,443.1 1112.5,444.3 C1114.6,445.5 1119.8,450.9 1122.6,451.5 C1125.4,452.1 1127.5,448.2 1129.6,448.1 C1131.7,448.0 1132.7,449.9 1135.3,450.9 C1137.9,451.9 1142.2,452.9 1145.4,454.0 C1148.6,455.1 1151.7,456.8 1154.2,457.4 C1156.7,458.0 1158.6,456.7 1160.6,457.4 C1162.6,458.1 1164.4,461.4 1166.3,461.6 C1168.2,461.8 1170.1,458.3 1171.9,458.4 C1173.7,458.5 1175.2,461.9 1177.0,462.0 C1178.8,462.1 1180.7,458.6 1182.7,458.7 C1184.7,458.8 1187.1,462.7 1189.0,462.9 C1190.9,463.1 1192.5,460.0 1194.1,460.0 C1195.7,460.0 1197.1,462.6 1198.5,462.9 C1199.9,463.2 1200.9,461.5 1202.3,462.0 C1203.7,462.5 1205.1,466.0 1206.7,465.8 C1208.3,465.6 1210.4,461.4 1211.8,461.0 C1213.2,460.6 1213.3,461.0 1214.9,463.5 C1216.5,466.0 1219.6,474.0 1221.3,476.1 C1223.0,478.2 1223.5,475.0 1225.0,475.9 C1226.5,476.8 1228.6,480.2 1230.1,481.2 C1231.6,482.2 1232.6,480.9 1233.9,481.8 C1235.2,482.7 1236.4,485.6 1237.7,486.3 C1239.0,487.1 1240.2,485.9 1241.5,486.3 C1242.8,486.7 1244.0,488.2 1245.3,488.8 C1246.6,489.4 1248.4,490.9 1249.1,490.0 C1249.8,489.1 1249.6,484.8 1249.7,483.7" stroke="#1c27dd" stroke-width="2.8" fill="none" stroke-linejoin="round" stroke-linecap="round" />
<path d="M715.5,591.6 C719.1,591.5 727.3,591.0 737.3,591.1 C747.3,591.2 762.8,593.3 775.5,592.4 C788.2,591.5 802.8,586.8 813.7,585.6 C824.6,584.4 831.9,586.2 841.0,585.1 C850.1,584.0 858.8,580.1 868.3,578.8 C877.8,577.5 889.6,578.6 898.3,577.4 C906.9,576.2 914.3,571.9 920.2,571.4 C926.1,570.9 927.9,573.6 933.8,574.1 C939.7,574.6 949.7,573.1 955.6,574.1 C961.5,575.1 965.2,579.4 969.3,580.2 C973.4,581.0 973.9,579.2 980.2,578.8 C986.5,578.4 999.1,579.4 1007.3,578.0 C1015.4,576.6 1022.3,570.2 1029.1,570.6 C1035.9,571.0 1043.0,578.9 1048.2,580.2 C1053.4,581.5 1057.0,578.9 1060.0,578.3 C1063.0,577.7 1063.9,578.3 1066.1,576.8 C1068.3,575.3 1070.3,570.5 1073.2,569.2 C1076.1,567.9 1080.9,568.9 1083.4,569.2 C1086.0,569.5 1087.0,570.8 1088.5,571.2 C1090.0,571.6 1091.1,571.4 1092.6,571.7 C1094.1,572.0 1095.9,573.3 1097.6,573.2 C1099.3,573.1 1101.0,572.1 1102.7,571.2 C1104.4,570.3 1105.8,568.5 1107.8,567.6 C1109.8,566.8 1111.9,567.0 1114.9,566.1 C1118.0,565.2 1122.9,563.5 1126.1,562.1 C1129.3,560.8 1131.4,559.1 1134.3,558.0 C1137.2,556.9 1140.9,556.2 1143.4,555.4 C1145.9,554.6 1147.5,554.4 1149.5,553.4 C1151.5,552.4 1153.4,549.8 1155.6,549.3 C1157.8,548.8 1160.7,550.5 1162.7,550.4 C1164.7,550.3 1165.6,550.2 1167.8,548.8 C1170.0,547.4 1173.6,543.0 1176.0,542.2 C1178.4,541.5 1179.7,545.4 1182.1,544.3 C1184.5,543.2 1187.5,537.5 1190.2,535.6 C1192.9,533.7 1196.0,534.0 1198.4,532.6 C1200.8,531.2 1202.7,527.8 1204.5,527.0 C1206.3,526.2 1207.8,527.8 1209.5,527.7 C1211.2,527.7 1212.7,527.5 1214.6,526.7 C1216.5,525.9 1218.7,523.5 1220.7,522.9 C1222.7,522.3 1224.4,523.8 1226.8,522.9 C1229.2,522.0 1232.3,518.4 1235.0,517.3 C1237.7,516.2 1240.7,516.9 1243.1,516.5 C1245.5,516.1 1248.2,515.3 1249.2,515.1" stroke="#e42424" stroke-width="2.8" fill="none" stroke-linejoin="round" stroke-linecap="round" />
</g>
<rect x="1296.9" y="351.5" width="616" height="304.5" fill="#ffffff" rx="0" />
<line x1="1337" y1="380.5" x2="1873" y2="380.5" stroke="#d9d9d9" stroke-width="1" />
<line x1="1337" y1="386.5" x2="1873" y2="386.5" stroke="#d9d9d9" stroke-width="1" />
<line x1="1337" y1="393.5" x2="1873" y2="393.5" stroke="#d9d9d9" stroke-width="1" />
<line x1="1337" y1="399.5" x2="1873" y2="399.5" stroke="#d9d9d9" stroke-width="1" />
<line x1="1337" y1="412.5" x2="1873" y2="412.5" stroke="#d9d9d9" stroke-width="1" />
<line x1="1337" y1="418.5" x2="1873" y2="418.5" stroke="#d9d9d9" stroke-width="1" />
<line x1="1337" y1="425.5" x2="1873" y2="425.5" stroke="#d9d9d9" stroke-width="1" />
<line x1="1337" y1="431.5" x2="1873" y2="431.5" stroke="#d9d9d9" stroke-width="1" />
<line x1="1337" y1="444.5" x2="1873" y2="444.5" stroke="#d9d9d9" stroke-width="1" />
<line x1="1337" y1="451.5" x2="1873" y2="451.5" stroke="#d9d9d9" stroke-width="1" />
<line x1="1337" y1="457.5" x2="1873" y2="457.5" stroke="#d9d9d9" stroke-width="1" />
<line x1="1337" y1="464.5" x2="1873" y2="464.5" stroke="#d9d9d9" stroke-width="1" />
<line x1="1337" y1="477.5" x2="1873" y2="477.5" stroke="#d9d9d9" stroke-width="1" />
<line x1="1337" y1="483.5" x2="1873" y2="483.5" stroke="#d9d9d9" stroke-width="1" />
<line x1="1337" y1="490.5" x2="1873" y2="490.5" stroke="#d9d9d9" stroke-width="1" />
<line x1="1337" y1="496.5" x2="1873" y2="496.5" stroke="#d9d9d9" stroke-width="1" />
<line x1="1337" y1="509.5" x2="1873" y2="509.5" stroke="#d9d9d9" stroke-width="1" />
<line x1="1337" y1="516.5" x2="1873" y2="516.5" stroke="#d9d9d9" stroke-width="1" />
<line x1="1337" y1="522.5" x2="1873" y2="522.5" stroke="#d9d9d9" stroke-width="1" />
<line x1="1337" y1="529.5" x2="1873" y2="529.5" stroke="#d9d9d9" stroke-width="1" />
<line x1="1337" y1="541.5" x2="1873" y2="541.5" stroke="#d9d9d9" stroke-width="1" />
<line x1="1337" y1="548.5" x2="1873" y2="548.5" stroke="#d9d9d9" stroke-width="1" />
<line x1="1337" y1="554.5" x2="1873" y2="554.5" stroke="#d9d9d9" stroke-width="1" />
<line x1="1337" y1="561.5" x2="1873" y2="561.5" stroke="#d9d9d9" stroke-width="1" />
<line x1="1337" y1="574.5" x2="1873" y2="574.5" stroke="#d9d9d9" stroke-width="1" />
<line x1="1337" y1="580.5" x2="1873" y2="580.5" stroke="#d9d9d9" stroke-width="1" />
<line x1="1337" y1="587.5" x2="1873" y2="587.5" stroke="#d9d9d9" stroke-width="1" />
<line x1="1337" y1="593.5" x2="1873" y2="593.5" stroke="#d9d9d9" stroke-width="1" />
<line x1="1337" y1="606.5" x2="1873" y2="606.5" stroke="#d9d9d9" stroke-width="1" />
<line x1="1337" y1="613.5" x2="1873" y2="613.5" stroke="#d9d9d9" stroke-width="1" />
<line x1="1337" y1="619.5" x2="1873" y2="619.5" stroke="#d9d9d9" stroke-width="1" />
<line x1="1337" y1="626.5" x2="1873" y2="626.5" stroke="#d9d9d9" stroke-width="1" />
<line x1="1384.5" y1="373.6" x2="1384.5" y2="632.6" stroke="#dcdcdc" stroke-width="1" />
<line x1="1417.5" y1="373.6" x2="1417.5" y2="632.6" stroke="#dcdcdc" stroke-width="1" />
<line x1="1443.5" y1="373.6" x2="1443.5" y2="632.6" stroke="#dcdcdc" stroke-width="1" />
<line x1="1464.5" y1="373.6" x2="1464.5" y2="632.6" stroke="#dcdcdc" stroke-width="1" />
<line x1="1482.5" y1="373.6" x2="1482.5" y2="632.6" stroke="#dcdcdc" stroke-width="1" />
<line x1="1498.5" y1="373.6" x2="1498.5" y2="632.6" stroke="#dcdcdc" stroke-width="1" />
<line x1="1512.5" y1="373.6" x2="1512.5" y2="632.6" stroke="#dcdcdc" stroke-width="1" />
<line x1="1605.5" y1="373.6" x2="1605.5" y2="632.6" stroke="#dcdcdc" stroke-width="1" />
<line x1="1652.5" y1="373.6" x2="1652.5" y2="632.6" stroke="#dcdcdc" stroke-width="1" />
<line x1="1685.5" y1="373.6" x2="1685.5" y2="632.6" stroke="#dcdcdc" stroke-width="1" />
<line x1="1711.5" y1="373.6" x2="1711.5" y2="632.6" stroke="#dcdcdc" stroke-width="1" />
<line x1="1732.5" y1="373.6" x2="1732.5" y2="632.6" stroke="#dcdcdc" stroke-width="1" />
<line x1="1750.5" y1="373.6" x2="1750.5" y2="632.6" stroke="#dcdcdc" stroke-width="1" />
<line x1="1766.5" y1="373.6" x2="1766.5" y2="632.6" stroke="#dcdcdc" stroke-width="1" />
<line x1="1780.5" y1="373.6" x2="1780.5" y2="632.6" stroke="#dcdcdc" stroke-width="1" />
<line x1="1524.5" y1="373.6" x2="1524.5" y2="632.6" stroke="#888888" stroke-width="1.15" />
<line x1="1792.5" y1="373.6" x2="1792.5" y2="632.6" stroke="#888888" stroke-width="1.15" />
<line x1="1337" y1="405.5" x2="1873" y2="405.5" stroke="#888888" stroke-width="1.15" />
<line x1="1337" y1="438.5" x2="1873" y2="438.5" stroke="#888888" stroke-width="1.15" />
<line x1="1337" y1="470.5" x2="1873" y2="470.5" stroke="#888888" stroke-width="1.15" />
<line x1="1337" y1="503.5" x2="1873" y2="503.5" stroke="#888888" stroke-width="1.15" />
<line x1="1337" y1="535.5" x2="1873" y2="535.5" stroke="#888888" stroke-width="1.15" />
<line x1="1337" y1="567.5" x2="1873" y2="567.5" stroke="#888888" stroke-width="1.15" />
<line x1="1337" y1="600.5" x2="1873" y2="600.5" stroke="#888888" stroke-width="1.15" />
<rect x="1337.5" y="373.5" width="536" height="259" fill="none" stroke="#858585" stroke-width="1.3" rx="0" />
<text transform="translate(1331.5,376.1) scale(0.93,1)" font-size="13.97" fill="#1a1a1a" stroke="#1a1a1a" text-anchor="end">10</text>
<text transform="translate(1331.5,408.475) scale(0.93,1)" font-size="13.97" fill="#1a1a1a" stroke="#1a1a1a" text-anchor="end">5</text>
<text transform="translate(1331.5,440.85) scale(0.93,1)" font-size="13.97" fill="#1a1a1a" stroke="#1a1a1a" text-anchor="end">0</text>
<text transform="translate(1331.5,473.225) scale(0.93,1)" font-size="13.97" fill="#1a1a1a" stroke="#1a1a1a" text-anchor="end">-5</text>
<text transform="translate(1331.5,505.6) scale(0.93,1)" font-size="13.97" fill="#1a1a1a" stroke="#1a1a1a" text-anchor="end">-10</text>
<text transform="translate(1331.5,537.975) scale(0.93,1)" font-size="13.97" fill="#1a1a1a" stroke="#1a1a1a" text-anchor="end">-15</text>
<text transform="translate(1331.5,570.35) scale(0.93,1)" font-size="13.97" fill="#1a1a1a" stroke="#1a1a1a" text-anchor="end">-20</text>
<text transform="translate(1331.5,602.725) scale(0.93,1)" font-size="13.97" fill="#1a1a1a" stroke="#1a1a1a" text-anchor="end">-25</text>
<text transform="translate(1331.5,635.1) scale(0.93,1)" font-size="13.97" fill="#1a1a1a" stroke="#1a1a1a" text-anchor="end">-30</text>
<text transform="translate(1893,376.1) scale(0.93,1)" font-size="13.97" fill="#1a1a1a" stroke="#1a1a1a" text-anchor="middle">180</text>
<text transform="translate(1893,408.475) scale(0.93,1)" font-size="13.97" fill="#1a1a1a" stroke="#1a1a1a" text-anchor="middle">135</text>
<text transform="translate(1893,440.85) scale(0.93,1)" font-size="13.97" fill="#1a1a1a" stroke="#1a1a1a" text-anchor="middle">90</text>
<text transform="translate(1893,473.225) scale(0.93,1)" font-size="13.97" fill="#1a1a1a" stroke="#1a1a1a" text-anchor="middle">45</text>
<text transform="translate(1893,505.6) scale(0.93,1)" font-size="13.97" fill="#1a1a1a" stroke="#1a1a1a" text-anchor="middle">0</text>
<text transform="translate(1893,537.975) scale(0.93,1)" font-size="13.97" fill="#1a1a1a" stroke="#1a1a1a" text-anchor="middle">-45</text>
<text transform="translate(1893,570.35) scale(0.93,1)" font-size="13.97" fill="#1a1a1a" stroke="#1a1a1a" text-anchor="middle">-90</text>
<text transform="translate(1893,602.725) scale(0.93,1)" font-size="13.97" fill="#1a1a1a" stroke="#1a1a1a" text-anchor="middle">-135</text>
<text transform="translate(1893,635.1) scale(0.93,1)" font-size="13.97" fill="#1a1a1a" stroke="#1a1a1a" text-anchor="middle">-180</text>
<text transform="translate(1337.0,648.1) scale(0.93,1)" font-size="13.97" fill="#1a1a1a" stroke="#1a1a1a" text-anchor="middle">200Hz</text>
<text transform="translate(1443.647922324106,648.1) scale(0.93,1)" font-size="13.97" fill="#1a1a1a" stroke="#1a1a1a" text-anchor="middle">500</text>
<text transform="translate(1524.3239611620531,648.1) scale(0.93,1)" font-size="13.97" fill="#1a1a1a" stroke="#1a1a1a" text-anchor="middle">1k</text>
<text transform="translate(1605.0,648.1) scale(0.93,1)" font-size="13.97" fill="#1a1a1a" stroke="#1a1a1a" text-anchor="middle">2k</text>
<text transform="translate(1711.647922324106,648.1) scale(0.93,1)" font-size="13.97" fill="#1a1a1a" stroke="#1a1a1a" text-anchor="middle">5k</text>
<text transform="translate(1792.323961162053,648.1) scale(0.93,1)" font-size="13.97" fill="#1a1a1a" stroke="#1a1a1a" text-anchor="middle">10k</text>
<text transform="translate(1873.0,648.1) scale(0.93,1)" font-size="13.97" fill="#1a1a1a" stroke="#1a1a1a" text-anchor="middle">20k</text>
<text transform="translate(1605.0,365.3) scale(0.93,1)" font-size="13.97" fill="#1a1a1a" stroke="#1a1a1a" text-anchor="middle">Filter</text>
<text transform="translate(1339.3,369.40000000000003) scale(0.93,1)" font-size="13.97" fill="#1a1a1a" stroke="#1a1a1a" text-anchor="start">dB</text>
<text transform="translate(1870,369.40000000000003) scale(0.93,1)" font-size="13.97" fill="#1a1a1a" stroke="#1a1a1a" text-anchor="end">deg</text>
<clipPath id="c1337373"><rect x="1337" y="373.6" width="536" height="259.0"/></clipPath>
<g clip-path="url(#c1337373)">
<path d="M1337.2,438.3 C1344.6,438.9 1363.8,440.1 1381.7,441.7 C1399.6,443.3 1430.5,446.5 1444.8,448.0 C1459.1,449.5 1454.5,449.6 1467.7,450.9 C1480.9,452.1 1508.4,454.2 1523.7,455.5 C1539.0,456.8 1548.8,456.8 1559.5,458.4 C1570.2,460.0 1580.5,463.2 1588.2,465.3 C1595.9,467.4 1600.2,468.7 1605.5,471.0 C1610.8,473.3 1614.5,474.8 1619.8,479.0 C1625.0,483.2 1631.3,490.3 1637.0,496.3 C1642.7,502.3 1648.0,508.2 1654.2,514.9 C1660.4,521.6 1666.2,527.1 1674.3,536.4 C1682.4,545.7 1693.4,560.2 1703.0,570.9 C1712.6,581.6 1721.9,590.1 1731.7,600.4 C1741.5,610.7 1756.2,626.5 1761.9,632.6 C1767.6,638.7 1765.3,636.3 1766.0,637.0" stroke="#ea4249" stroke-width="1.4" fill="none" stroke-linejoin="round" stroke-linecap="round" />
<path d="M1498.0,637.0 C1498.7,636.3 1497.9,636.9 1502.2,632.6 C1506.5,628.3 1512.7,621.8 1523.7,611.0 C1534.7,600.2 1555.1,580.9 1568.2,568.0 C1581.3,555.1 1591.1,545.6 1602.6,533.6 C1614.1,521.6 1625.5,506.8 1637.0,496.3 C1648.5,485.8 1662.4,476.2 1671.5,470.4 C1680.6,464.5 1684.8,463.5 1691.5,461.2 C1698.2,458.9 1705.4,457.4 1711.6,456.7 C1717.8,455.9 1716.0,456.2 1728.9,456.7 C1741.8,457.2 1764.9,458.6 1789.1,459.5 C1813.2,460.4 1859.7,461.4 1873.8,461.8" stroke="#3e9a47" stroke-width="1.5" fill="none" stroke-linejoin="round" stroke-linecap="round" />
</g>
<rect x="674.5" y="663" width="615" height="306" fill="#ffffff" rx="0" />
<line x1="714.5" y1="692.5" x2="1249.5" y2="692.5" stroke="#d9d9d9" stroke-width="1" />
<line x1="714.5" y1="698.5" x2="1249.5" y2="698.5" stroke="#d9d9d9" stroke-width="1" />
<line x1="714.5" y1="705.5" x2="1249.5" y2="705.5" stroke="#d9d9d9" stroke-width="1" />
<line x1="714.5" y1="711.5" x2="1249.5" y2="711.5" stroke="#d9d9d9" stroke-width="1" />
<line x1="714.5" y1="724.5" x2="1249.5" y2="724.5" stroke="#d9d9d9" stroke-width="1" />
<line x1="714.5" y1="731.5" x2="1249.5" y2="731.5" stroke="#d9d9d9" stroke-width="1" />
<line x1="714.5" y1="737.5" x2="1249.5" y2="737.5" stroke="#d9d9d9" stroke-width="1" />
<line x1="714.5" y1="744.5" x2="1249.5" y2="744.5" stroke="#d9d9d9" stroke-width="1" />
<line x1="714.5" y1="757.5" x2="1249.5" y2="757.5" stroke="#d9d9d9" stroke-width="1" />
<line x1="714.5" y1="764.5" x2="1249.5" y2="764.5" stroke="#d9d9d9" stroke-width="1" />
<line x1="714.5" y1="770.5" x2="1249.5" y2="770.5" stroke="#d9d9d9" stroke-width="1" />
<line x1="714.5" y1="777.5" x2="1249.5" y2="777.5" stroke="#d9d9d9" stroke-width="1" />
<line x1="714.5" y1="790.5" x2="1249.5" y2="790.5" stroke="#d9d9d9" stroke-width="1" />
<line x1="714.5" y1="796.5" x2="1249.5" y2="796.5" stroke="#d9d9d9" stroke-width="1" />
<line x1="714.5" y1="803.5" x2="1249.5" y2="803.5" stroke="#d9d9d9" stroke-width="1" />
<line x1="714.5" y1="809.5" x2="1249.5" y2="809.5" stroke="#d9d9d9" stroke-width="1" />
<line x1="714.5" y1="822.5" x2="1249.5" y2="822.5" stroke="#d9d9d9" stroke-width="1" />
<line x1="714.5" y1="829.5" x2="1249.5" y2="829.5" stroke="#d9d9d9" stroke-width="1" />
<line x1="714.5" y1="835.5" x2="1249.5" y2="835.5" stroke="#d9d9d9" stroke-width="1" />
<line x1="714.5" y1="842.5" x2="1249.5" y2="842.5" stroke="#d9d9d9" stroke-width="1" />
<line x1="714.5" y1="855.5" x2="1249.5" y2="855.5" stroke="#d9d9d9" stroke-width="1" />
<line x1="714.5" y1="862.5" x2="1249.5" y2="862.5" stroke="#d9d9d9" stroke-width="1" />
<line x1="714.5" y1="868.5" x2="1249.5" y2="868.5" stroke="#d9d9d9" stroke-width="1" />
<line x1="714.5" y1="875.5" x2="1249.5" y2="875.5" stroke="#d9d9d9" stroke-width="1" />
<line x1="714.5" y1="888.5" x2="1249.5" y2="888.5" stroke="#d9d9d9" stroke-width="1" />
<line x1="714.5" y1="894.5" x2="1249.5" y2="894.5" stroke="#d9d9d9" stroke-width="1" />
<line x1="714.5" y1="901.5" x2="1249.5" y2="901.5" stroke="#d9d9d9" stroke-width="1" />
<line x1="714.5" y1="907.5" x2="1249.5" y2="907.5" stroke="#d9d9d9" stroke-width="1" />
<line x1="714.5" y1="921.5" x2="1249.5" y2="921.5" stroke="#d9d9d9" stroke-width="1" />
<line x1="714.5" y1="927.5" x2="1249.5" y2="927.5" stroke="#d9d9d9" stroke-width="1" />
<line x1="714.5" y1="934.5" x2="1249.5" y2="934.5" stroke="#d9d9d9" stroke-width="1" />
<line x1="714.5" y1="940.5" x2="1249.5" y2="940.5" stroke="#d9d9d9" stroke-width="1" />
<line x1="761.5" y1="685.5" x2="761.5" y2="947.2" stroke="#dcdcdc" stroke-width="1" />
<line x1="795.5" y1="685.5" x2="795.5" y2="947.2" stroke="#dcdcdc" stroke-width="1" />
<line x1="820.5" y1="685.5" x2="820.5" y2="947.2" stroke="#dcdcdc" stroke-width="1" />
<line x1="842.5" y1="685.5" x2="842.5" y2="947.2" stroke="#dcdcdc" stroke-width="1" />
<line x1="860.5" y1="685.5" x2="860.5" y2="947.2" stroke="#dcdcdc" stroke-width="1" />
<line x1="875.5" y1="685.5" x2="875.5" y2="947.2" stroke="#dcdcdc" stroke-width="1" />
<line x1="889.5" y1="685.5" x2="889.5" y2="947.2" stroke="#dcdcdc" stroke-width="1" />
<line x1="982.5" y1="685.5" x2="982.5" y2="947.2" stroke="#dcdcdc" stroke-width="1" />
<line x1="1029.5" y1="685.5" x2="1029.5" y2="947.2" stroke="#dcdcdc" stroke-width="1" />
<line x1="1062.5" y1="685.5" x2="1062.5" y2="947.2" stroke="#dcdcdc" stroke-width="1" />
<line x1="1088.5" y1="685.5" x2="1088.5" y2="947.2" stroke="#dcdcdc" stroke-width="1" />
<line x1="1109.5" y1="685.5" x2="1109.5" y2="947.2" stroke="#dcdcdc" stroke-width="1" />
<line x1="1127.5" y1="685.5" x2="1127.5" y2="947.2" stroke="#dcdcdc" stroke-width="1" />
<line x1="1143.5" y1="685.5" x2="1143.5" y2="947.2" stroke="#dcdcdc" stroke-width="1" />
<line x1="1156.5" y1="685.5" x2="1156.5" y2="947.2" stroke="#dcdcdc" stroke-width="1" />
<line x1="901.5" y1="685.5" x2="901.5" y2="947.2" stroke="#888888" stroke-width="1.15" />
<line x1="1168.5" y1="685.5" x2="1168.5" y2="947.2" stroke="#888888" stroke-width="1.15" />
<line x1="714.5" y1="718.5" x2="1249.5" y2="718.5" stroke="#888888" stroke-width="1.15" />
<line x1="714.5" y1="750.5" x2="1249.5" y2="750.5" stroke="#888888" stroke-width="1.15" />
<line x1="714.5" y1="783.5" x2="1249.5" y2="783.5" stroke="#888888" stroke-width="1.15" />
<line x1="714.5" y1="816.5" x2="1249.5" y2="816.5" stroke="#888888" stroke-width="1.15" />
<line x1="714.5" y1="849.5" x2="1249.5" y2="849.5" stroke="#888888" stroke-width="1.15" />
<line x1="714.5" y1="881.5" x2="1249.5" y2="881.5" stroke="#888888" stroke-width="1.15" />
<line x1="714.5" y1="914.5" x2="1249.5" y2="914.5" stroke="#888888" stroke-width="1.15" />
<rect x="714.5" y="685.5" width="535" height="262" fill="none" stroke="#858585" stroke-width="1.3" rx="0" />
<text transform="translate(709.0,688.0) scale(0.93,1)" font-size="13.97" fill="#1a1a1a" stroke="#1a1a1a" text-anchor="end">100</text>
<text transform="translate(709.0,720.7125) scale(0.93,1)" font-size="13.97" fill="#1a1a1a" stroke="#1a1a1a" text-anchor="end">95</text>
<text transform="translate(709.0,753.425) scale(0.93,1)" font-size="13.97" fill="#1a1a1a" stroke="#1a1a1a" text-anchor="end">90</text>
<text transform="translate(709.0,786.1375) scale(0.93,1)" font-size="13.97" fill="#1a1a1a" stroke="#1a1a1a" text-anchor="end">85</text>
<text transform="translate(709.0,818.85) scale(0.93,1)" font-size="13.97" fill="#1a1a1a" stroke="#1a1a1a" text-anchor="end">80</text>
<text transform="translate(709.0,851.5625) scale(0.93,1)" font-size="13.97" fill="#1a1a1a" stroke="#1a1a1a" text-anchor="end">75</text>
<text transform="translate(709.0,884.2750000000001) scale(0.93,1)" font-size="13.97" fill="#1a1a1a" stroke="#1a1a1a" text-anchor="end">70</text>
<text transform="translate(709.0,916.9875000000001) scale(0.93,1)" font-size="13.97" fill="#1a1a1a" stroke="#1a1a1a" text-anchor="end">65</text>
<text transform="translate(709.0,949.7) scale(0.93,1)" font-size="13.97" fill="#1a1a1a" stroke="#1a1a1a" text-anchor="end">60</text>
<text transform="translate(714.5,962.7) scale(0.93,1)" font-size="13.97" fill="#1a1a1a" stroke="#1a1a1a" text-anchor="middle">200Hz</text>
<text transform="translate(820.9489523197701,962.7) scale(0.93,1)" font-size="13.97" fill="#1a1a1a" stroke="#1a1a1a" text-anchor="middle">500</text>
<text transform="translate(901.4744761598851,962.7) scale(0.93,1)" font-size="13.97" fill="#1a1a1a" stroke="#1a1a1a" text-anchor="middle">1k</text>
<text transform="translate(982.0,962.7) scale(0.93,1)" font-size="13.97" fill="#1a1a1a" stroke="#1a1a1a" text-anchor="middle">2k</text>
<text transform="translate(1088.4489523197701,962.7) scale(0.93,1)" font-size="13.97" fill="#1a1a1a" stroke="#1a1a1a" text-anchor="middle">5k</text>
<text transform="translate(1168.974476159885,962.7) scale(0.93,1)" font-size="13.97" fill="#1a1a1a" stroke="#1a1a1a" text-anchor="middle">10k</text>
<text transform="translate(1249.5,962.7) scale(0.93,1)" font-size="13.97" fill="#1a1a1a" stroke="#1a1a1a" text-anchor="middle">20k</text>
<text transform="translate(982.0,677.2) scale(0.93,1)" font-size="13.97" fill="#1a1a1a" stroke="#1a1a1a" text-anchor="middle" textLength="103.9" lengthAdjust="spacingAndGlyphs">Directivity (hor)</text>
<text transform="translate(716.8,681.3) scale(0.93,1)" font-size="13.97" fill="#1a1a1a" stroke="#1a1a1a" text-anchor="start">dB</text>
<clipPath id="c714685"><rect x="714.5" y="685.5" width="535.0" height="261.70000000000005"/></clipPath>
<g clip-path="url(#c714685)">
<path d="M715.5,753.7 C723.7,753.7 751.9,753.0 764.6,753.7 C777.3,754.4 782.8,756.4 791.9,757.8 C801.0,759.2 810.6,761.1 819.2,761.9 C827.8,762.7 836.4,761.3 843.7,762.4 C851.0,763.5 856.9,767.3 862.8,768.7 C868.7,770.1 872.8,769.4 879.2,770.9 C885.6,772.4 893.7,775.0 901.0,777.7 C908.3,780.4 917.0,786.7 922.9,787.0 C928.8,787.3 931.0,780.2 936.5,779.6 C942.0,779.0 950.6,781.7 955.6,783.2 C960.6,784.7 962.4,786.9 966.5,788.6 C970.6,790.3 975.9,793.2 980.2,793.3 C984.5,793.4 987.8,788.3 992.3,789.2 C996.8,790.1 1001.2,796.2 1007.3,798.7 C1013.4,801.2 1021.8,805.1 1029.1,804.2 C1036.4,803.3 1045.3,795.6 1051.0,793.3 C1056.7,791.0 1059.1,788.9 1063.2,790.5 C1067.3,792.1 1071.2,801.4 1075.5,802.8 C1079.8,804.2 1084.7,797.3 1089.2,798.7 C1093.8,800.1 1098.7,809.0 1102.8,811.0 C1106.9,813.0 1108.7,807.8 1113.7,810.5 C1118.7,813.2 1128.4,824.0 1132.8,827.4 C1137.2,830.8 1137.7,829.8 1140.0,830.7 C1142.3,831.7 1144.1,830.3 1146.7,833.1 C1149.3,835.9 1153.3,845.5 1155.8,847.6 C1158.3,849.7 1159.4,845.6 1161.8,845.8 C1164.2,846.0 1167.7,846.0 1170.3,848.9 C1172.9,851.8 1175.6,862.2 1177.6,863.4 C1179.6,864.6 1180.7,854.8 1182.5,856.1 C1184.3,857.4 1186.6,870.6 1188.5,871.3 C1190.4,872.0 1192.0,860.7 1194.0,860.4 C1196.0,860.1 1197.6,868.3 1200.7,869.5 C1203.8,870.7 1209.6,865.8 1212.8,867.7 C1216.0,869.6 1217.7,880.9 1220.1,881.0 C1222.5,881.1 1224.9,869.6 1227.3,868.3 C1229.7,867.0 1232.6,873.0 1234.6,873.1 C1236.6,873.2 1237.1,869.1 1239.5,868.9 C1241.9,868.7 1247.6,871.4 1249.2,871.9" stroke="#e23a3a" stroke-width="1.4" fill="none" stroke-linejoin="round" stroke-linecap="round" />
<path d="M715.5,750.4 C719.1,750.0 726.8,748.0 737.3,748.2 C747.8,748.4 766.8,750.4 778.2,751.5 C789.6,752.6 796.4,755.2 805.5,755.1 C814.6,755.0 826.4,751.6 832.8,751.0 C839.2,750.4 838.7,750.4 843.7,751.5 C848.7,752.6 856.9,756.4 862.8,757.8 C868.7,759.2 872.8,758.2 879.2,759.7 C885.6,761.2 893.7,764.9 901.0,766.8 C908.3,768.7 916.1,771.0 922.9,770.9 C929.7,770.8 932.5,765.5 942.0,766.0 C951.5,766.5 971.8,773.3 980.2,774.2 C988.6,775.1 986.4,770.5 992.3,771.4 C998.2,772.3 1009.4,777.8 1015.5,779.6 C1021.6,781.4 1024.1,783.9 1029.1,782.3 C1034.1,780.7 1040.0,773.5 1045.5,770.1 C1051.0,766.7 1056.9,761.2 1061.9,761.9 C1066.9,762.6 1071.0,773.1 1075.5,774.2 C1080.0,775.3 1084.7,767.8 1089.2,768.7 C1093.8,769.6 1098.7,778.2 1102.8,779.6 C1106.9,781.0 1110.0,776.2 1113.7,776.9 C1117.4,777.6 1120.3,780.5 1124.7,783.7 C1129.1,786.9 1136.2,793.4 1140.0,796.1 C1143.8,798.8 1144.5,797.6 1147.3,799.7 C1150.1,801.8 1153.8,806.3 1157.0,808.8 C1160.2,811.3 1164.4,814.3 1166.7,814.9 C1169.0,815.5 1168.9,810.0 1170.9,812.5 C1172.9,815.0 1176.8,828.0 1178.8,830.1 C1180.8,832.2 1181.3,823.7 1183.1,825.2 C1184.9,826.7 1187.8,838.2 1189.7,839.1 C1191.6,840.0 1192.0,831.2 1194.6,830.7 C1197.2,830.2 1202.5,835.9 1205.5,836.1 C1208.5,836.3 1210.4,830.0 1212.8,831.9 C1215.2,833.8 1217.9,847.0 1220.1,847.6 C1222.3,848.2 1224.1,837.0 1226.1,835.5 C1228.1,834.0 1230.0,839.3 1232.2,838.5 C1234.4,837.7 1237.3,832.2 1239.5,830.7 C1241.7,829.2 1243.9,830.0 1245.5,829.4 C1247.1,828.8 1248.6,827.4 1249.2,827.0" stroke="#ef9a3c" stroke-width="1.4" fill="none" stroke-linejoin="round" stroke-linecap="round" />
<path d="M715.5,746.0 C728.2,746.4 772.4,749.0 791.9,748.2 C811.4,747.4 821.4,741.6 832.8,741.4 C844.2,741.2 853.3,745.4 860.1,746.9 C866.9,748.4 867.0,749.6 873.8,750.4 C880.6,751.2 892.4,750.4 901.0,751.5 C909.6,752.6 918.8,757.1 925.6,757.0 C932.4,756.9 935.2,751.0 942.0,751.0 C948.8,751.0 960.2,756.9 966.5,757.0 C972.8,757.1 973.6,752.0 980.0,751.5 C986.4,751.0 996.4,752.1 1004.6,753.7 C1012.8,755.3 1019.5,763.2 1029.1,761.3 C1038.6,759.4 1054.4,743.0 1061.9,742.2 C1069.4,741.4 1069.7,755.6 1074.2,756.4 C1078.8,757.2 1084.7,746.4 1089.2,746.9 C1093.8,747.4 1097.6,758.1 1101.5,759.1 C1105.4,760.1 1108.1,752.4 1112.4,753.1 C1116.7,753.8 1122.8,760.0 1127.4,763.2 C1132.0,766.4 1135.9,769.5 1140.0,772.4 C1144.1,775.3 1149.1,779.3 1152.1,780.9 C1155.1,782.5 1156.0,779.7 1158.2,782.1 C1160.4,784.5 1163.2,793.9 1165.5,795.5 C1167.8,797.1 1170.3,791.4 1172.1,791.8 C1173.9,792.2 1174.5,793.9 1176.4,797.9 C1178.3,801.9 1181.7,812.5 1183.7,815.5 C1185.7,818.5 1186.5,813.8 1188.5,816.1 C1190.5,818.4 1193.6,827.1 1195.8,829.4 C1198.0,831.7 1200.1,829.4 1201.9,830.1 C1203.7,830.8 1204.9,834.0 1206.7,833.7 C1208.5,833.4 1210.6,824.7 1212.8,828.2 C1215.0,831.7 1217.9,851.7 1220.1,854.9 C1222.3,858.1 1224.5,848.6 1226.1,847.6 C1227.7,846.6 1228.5,847.9 1229.8,848.9 C1231.1,849.9 1232.4,854.5 1234.0,853.7 C1235.6,852.9 1237.6,847.3 1239.5,844.0 C1241.4,840.7 1243.9,837.1 1245.5,833.7 C1247.1,830.3 1248.3,826.5 1249.2,823.4 C1250.1,820.3 1250.7,816.4 1251.0,815.0" stroke="#c5dc3a" stroke-width="1.4" fill="none" stroke-linejoin="round" stroke-linecap="round" />
<path d="M715.5,743.3 C728.2,743.4 773.2,745.3 791.9,744.1 C810.5,742.9 815.6,736.3 827.4,736.0 C839.2,735.7 853.7,741.6 862.8,742.2 C871.9,742.8 875.6,739.3 882.0,739.5 C888.4,739.7 893.7,742.2 901.0,743.3 C908.3,744.4 918.8,746.9 925.6,746.0 C932.4,745.1 936.1,738.4 942.0,738.1 C947.9,737.8 954.8,743.6 961.1,744.4 C967.4,745.2 974.1,744.0 980.0,742.8 C985.9,741.6 990.5,737.8 996.4,737.3 C1002.3,736.8 1009.6,738.3 1015.5,740.0 C1021.4,741.7 1024.2,748.2 1031.9,747.7 C1039.6,747.2 1054.9,736.1 1061.9,737.3 C1069.0,738.5 1069.7,754.0 1074.2,755.1 C1078.8,756.2 1084.7,744.3 1089.2,744.1 C1093.8,743.9 1097.6,753.0 1101.5,753.7 C1105.4,754.4 1109.0,747.8 1112.4,748.2 C1115.8,748.7 1118.5,754.8 1121.9,756.4 C1125.3,758.0 1127.3,756.0 1132.8,757.8 C1138.3,759.6 1149.9,765.3 1154.7,767.3 C1159.5,769.3 1159.6,768.5 1161.8,770.0 C1164.0,771.5 1166.3,775.1 1167.9,776.1 C1169.5,777.1 1170.1,775.8 1171.5,776.1 C1172.9,776.4 1174.7,777.4 1176.4,777.9 C1178.1,778.4 1180.1,777.0 1181.9,779.1 C1183.7,781.2 1185.6,789.6 1187.3,790.6 C1189.0,791.6 1190.2,782.4 1192.2,785.2 C1194.2,788.0 1197.1,804.4 1199.4,807.6 C1201.7,810.8 1203.7,804.8 1206.1,804.6 C1208.5,804.4 1211.7,801.6 1214.0,806.4 C1216.3,811.1 1218.1,828.1 1220.1,833.1 C1222.1,838.1 1223.5,830.9 1226.1,836.1 C1228.7,841.4 1233.4,861.9 1235.8,864.6 C1238.2,867.3 1239.1,854.9 1240.7,852.5 C1242.3,850.1 1244.1,851.7 1245.5,850.1 C1246.9,848.5 1248.5,845.2 1249.2,842.8 C1249.9,840.4 1249.5,839.3 1249.8,835.5 C1250.1,831.7 1250.8,822.6 1251.0,820.0" stroke="#3fd24f" stroke-width="1.4" fill="none" stroke-linejoin="round" stroke-linecap="round" />
<path d="M715.5,741.4 C726.0,741.4 760.0,743.2 778.2,741.4 C796.4,739.6 810.5,731.7 824.6,730.5 C838.7,729.3 853.7,733.9 862.8,734.0 C871.9,734.1 872.8,731.2 879.2,731.3 C885.6,731.4 893.3,734.0 901.0,734.6 C908.7,735.2 918.8,735.7 925.6,734.6 C932.4,733.5 936.1,728.5 942.0,728.3 C947.9,728.1 956.1,731.9 961.1,733.2 C966.1,734.5 968.9,736.3 972.0,736.0 C975.1,735.7 974.6,732.2 980.0,731.3 C985.4,730.4 995.5,728.8 1004.6,730.5 C1013.7,732.2 1025.0,739.4 1034.6,741.4 C1044.1,743.4 1055.3,741.4 1061.9,742.8 C1068.5,744.2 1069.7,750.3 1074.2,749.6 C1078.8,748.9 1084.7,739.2 1089.2,738.7 C1093.8,738.2 1097.4,747.2 1101.5,746.9 C1105.6,746.6 1108.5,738.4 1113.7,736.8 C1118.9,735.2 1128.4,737.2 1132.8,737.3 C1137.2,737.4 1137.9,737.3 1140.0,737.3 C1142.1,737.3 1143.2,736.6 1145.6,737.3 C1148.0,737.9 1152.1,740.8 1154.5,741.2 C1156.9,741.6 1158.0,739.6 1160.0,739.8 C1162.0,740.0 1164.9,742.2 1166.7,742.3 C1168.5,742.4 1169.4,740.5 1171.1,740.6 C1172.8,740.8 1174.7,743.8 1176.7,743.2 C1178.8,742.6 1181.1,736.8 1183.4,736.9 C1185.7,737.0 1188.6,743.2 1190.6,744.0 C1192.6,744.8 1193.9,741.8 1195.6,741.7 C1197.3,741.6 1198.8,741.9 1200.6,743.4 C1202.4,744.9 1204.4,750.3 1206.2,750.6 C1208.0,750.9 1209.4,745.2 1211.2,745.1 C1213.0,745.0 1215.0,747.1 1216.8,750.1 C1218.6,753.1 1220.6,761.0 1222.3,763.4 C1224.0,765.8 1225.1,763.0 1226.8,764.5 C1228.5,766.0 1230.4,769.3 1232.3,772.3 C1234.2,775.3 1236.1,779.0 1237.9,782.3 C1239.8,785.6 1241.6,789.0 1243.4,792.3 C1245.2,795.6 1247.5,799.7 1248.8,802.0 C1250.1,804.3 1250.6,805.3 1251.0,806.0" stroke="#3fb9e2" stroke-width="1.4" fill="none" stroke-linejoin="round" stroke-linecap="round" />
<path d="M715.5,740.0 C726.0,740.1 760.0,742.3 778.2,740.6 C796.4,738.9 807.8,732.0 824.6,730.0 C841.4,728.0 866.5,728.3 879.2,728.6 C891.9,728.9 890.5,732.7 901.0,731.9 C911.5,731.1 930.4,723.0 942.0,723.7 C953.6,724.4 962.6,734.9 970.6,736.0 C978.6,737.1 984.3,731.4 990.0,730.5 C995.7,729.6 1002.2,730.5 1004.6,730.5" stroke="#3f7fe0" stroke-width="1.6" fill="none" stroke-linejoin="round" stroke-linecap="round" />
<path d="M715.5,738.5 C726.0,738.8 760.0,741.7 778.2,740.0 C796.4,738.3 807.8,730.7 824.6,728.5 C841.4,726.3 866.5,726.7 879.2,727.0 C891.9,727.3 890.5,731.3 901.0,730.5 C911.5,729.7 930.4,721.2 942.0,722.0 C953.6,722.8 964.3,733.9 970.6,735.5 C976.9,737.1 971.1,732.5 980.0,731.5 C988.9,730.5 1013.2,728.8 1023.7,729.5 C1034.2,730.2 1036.4,735.8 1042.8,736.0 C1049.2,736.2 1056.7,730.2 1061.9,730.5 C1067.1,730.8 1069.7,738.7 1074.2,737.9 C1078.8,737.1 1084.7,726.4 1089.2,725.9 C1093.8,725.4 1097.6,735.1 1101.5,735.0 C1105.4,734.9 1109.0,725.9 1112.4,725.0 C1115.8,724.1 1118.7,729.9 1121.9,729.7 C1125.1,729.5 1128.5,724.5 1131.5,723.7 C1134.5,722.9 1137.5,725.0 1140.0,725.0 C1142.5,725.0 1143.9,723.4 1146.7,723.4 C1149.5,723.4 1153.6,724.2 1156.7,724.7 C1159.8,725.2 1163.4,727.2 1165.6,726.7 C1167.8,726.2 1168.2,722.2 1170.0,721.7 C1171.8,721.2 1174.2,724.0 1176.2,723.4 C1178.2,722.8 1180.2,719.0 1182.3,718.4 C1184.4,717.8 1187.1,719.9 1188.9,719.5 C1190.8,719.1 1192.1,716.6 1193.4,716.1 C1194.7,715.6 1195.3,717.2 1196.7,716.7 C1198.1,716.2 1200.1,713.3 1201.7,713.4 C1203.3,713.5 1204.6,717.6 1206.2,717.3 C1207.8,717.0 1209.6,712.0 1211.2,711.7 C1212.8,711.4 1213.8,713.3 1215.6,715.6 C1217.4,717.9 1220.6,723.9 1222.3,725.6 C1224.0,727.3 1224.3,725.1 1225.6,725.8 C1226.9,726.4 1228.8,728.9 1230.1,729.5 C1231.4,730.1 1232.1,728.9 1233.4,729.5 C1234.7,730.1 1236.4,732.3 1237.9,733.2 C1239.4,734.1 1240.6,734.3 1242.3,735.0 C1244.0,735.7 1246.7,737.4 1247.9,737.3 C1249.1,737.2 1249.3,735.0 1249.6,734.5" stroke="#7d6ae8" stroke-width="1.4" fill="none" stroke-linejoin="round" stroke-linecap="round" />
<path d="M715.5,736.8 C719.1,736.7 726.8,735.7 737.3,736.0 C747.8,736.3 769.1,738.7 778.2,738.7 C787.3,738.7 784.2,738.0 791.9,736.0 C799.6,734.0 816.4,728.4 824.6,726.9 C832.8,725.4 834.6,726.5 841.0,726.9 C847.4,727.3 856.4,729.4 862.8,729.1 C869.2,728.8 872.8,725.1 879.2,725.0 C885.6,724.9 895.1,728.8 901.0,728.6 C906.9,728.4 910.2,724.1 914.7,723.7 C919.2,723.3 923.8,727.0 928.3,726.4 C932.8,725.8 937.5,720.4 942.0,720.4 C946.5,720.4 950.8,724.0 955.6,726.4 C960.4,728.8 966.5,733.9 970.6,734.6 C974.7,735.3 975.7,731.5 980.0,730.5 C984.3,729.5 989.1,728.9 996.4,728.6 C1003.7,728.3 1016.0,727.8 1023.7,728.6 C1031.4,729.4 1036.9,733.6 1042.8,733.2 C1048.7,732.8 1053.9,726.9 1059.1,726.4 C1064.3,725.9 1069.2,731.0 1074.2,730.5 C1079.2,730.0 1084.7,722.4 1089.2,723.1 C1093.8,723.8 1097.6,734.6 1101.5,734.6 C1105.4,734.6 1109.0,724.5 1112.4,723.1 C1115.8,721.7 1118.7,727.1 1121.9,726.4 C1125.1,725.7 1128.5,720.1 1131.5,719.0 C1134.5,717.9 1136.9,719.4 1140.0,719.5 C1143.1,719.6 1147.2,720.0 1150.0,719.5 C1152.8,719.0 1154.9,717.0 1156.7,716.7 C1158.5,716.4 1159.6,716.9 1161.1,717.8 C1162.6,718.7 1164.1,722.5 1165.6,722.3 C1167.1,722.1 1168.5,718.1 1170.0,716.7 C1171.5,715.3 1172.6,714.4 1174.5,713.9 C1176.4,713.4 1179.0,714.4 1181.2,713.9 C1183.4,713.4 1185.8,712.0 1187.8,710.6 C1189.8,709.2 1191.7,706.3 1193.4,705.6 C1195.1,704.9 1196.1,707.1 1197.8,706.5 C1199.5,705.9 1201.8,702.2 1203.4,701.7 C1205.0,701.2 1205.8,703.9 1207.3,703.3 C1208.8,702.7 1210.5,698.4 1212.3,698.3 C1214.1,698.2 1216.2,700.8 1217.9,702.8 C1219.6,704.8 1220.9,708.9 1222.3,710.0 C1223.7,711.1 1225.0,709.1 1226.2,709.5 C1227.4,709.9 1228.4,712.0 1229.5,712.2 C1230.6,712.4 1231.7,710.4 1232.9,710.6 C1234.1,710.8 1235.6,713.0 1236.8,713.4 C1238.0,713.8 1238.8,712.5 1240.1,712.8 C1241.4,713.1 1243.2,714.6 1244.6,715.0 C1246.0,715.4 1247.7,716.6 1248.5,715.0 C1249.3,713.4 1249.2,708.1 1249.6,705.6 C1250.0,703.1 1250.8,700.9 1251.0,700.0" stroke="#5e5e5e" stroke-width="3.2" fill="none" stroke-linejoin="round" stroke-linecap="round" />
</g>
<rect x="1296.9" y="663" width="616" height="306" fill="#ffffff" rx="0" />
<line x1="1337" y1="695.5" x2="1873" y2="695.5" stroke="#d9d9d9" stroke-width="1" />
<line x1="1337" y1="706.5" x2="1873" y2="706.5" stroke="#d9d9d9" stroke-width="1" />
<line x1="1337" y1="716.5" x2="1873" y2="716.5" stroke="#d9d9d9" stroke-width="1" />
<line x1="1337" y1="727.5" x2="1873" y2="727.5" stroke="#d9d9d9" stroke-width="1" />
<line x1="1337" y1="748.5" x2="1873" y2="748.5" stroke="#d9d9d9" stroke-width="1" />
<line x1="1337" y1="758.5" x2="1873" y2="758.5" stroke="#d9d9d9" stroke-width="1" />
<line x1="1337" y1="769.5" x2="1873" y2="769.5" stroke="#d9d9d9" stroke-width="1" />
<line x1="1337" y1="779.5" x2="1873" y2="779.5" stroke="#d9d9d9" stroke-width="1" />
<line x1="1337" y1="800.5" x2="1873" y2="800.5" stroke="#d9d9d9" stroke-width="1" />
<line x1="1337" y1="811.5" x2="1873" y2="811.5" stroke="#d9d9d9" stroke-width="1" />
<line x1="1337" y1="821.5" x2="1873" y2="821.5" stroke="#d9d9d9" stroke-width="1" />
<line x1="1337" y1="832.5" x2="1873" y2="832.5" stroke="#d9d9d9" stroke-width="1" />
<line x1="1337" y1="852.5" x2="1873" y2="852.5" stroke="#d9d9d9" stroke-width="1" />
<line x1="1337" y1="863.5" x2="1873" y2="863.5" stroke="#d9d9d9" stroke-width="1" />
<line x1="1337" y1="873.5" x2="1873" y2="873.5" stroke="#d9d9d9" stroke-width="1" />
<line x1="1337" y1="884.5" x2="1873" y2="884.5" stroke="#d9d9d9" stroke-width="1" />
<line x1="1337" y1="905.5" x2="1873" y2="905.5" stroke="#d9d9d9" stroke-width="1" />
<line x1="1337" y1="915.5" x2="1873" y2="915.5" stroke="#d9d9d9" stroke-width="1" />
<line x1="1337" y1="926.5" x2="1873" y2="926.5" stroke="#d9d9d9" stroke-width="1" />
<line x1="1337" y1="936.5" x2="1873" y2="936.5" stroke="#d9d9d9" stroke-width="1" />
<line x1="1384.5" y1="685.5" x2="1384.5" y2="947.2" stroke="#dcdcdc" stroke-width="1" />
<line x1="1417.5" y1="685.5" x2="1417.5" y2="947.2" stroke="#dcdcdc" stroke-width="1" />
<line x1="1443.5" y1="685.5" x2="1443.5" y2="947.2" stroke="#dcdcdc" stroke-width="1" />
<line x1="1464.5" y1="685.5" x2="1464.5" y2="947.2" stroke="#dcdcdc" stroke-width="1" />
<line x1="1482.5" y1="685.5" x2="1482.5" y2="947.2" stroke="#dcdcdc" stroke-width="1" />
<line x1="1498.5" y1="685.5" x2="1498.5" y2="947.2" stroke="#dcdcdc" stroke-width="1" />
<line x1="1512.5" y1="685.5" x2="1512.5" y2="947.2" stroke="#dcdcdc" stroke-width="1" />
<line x1="1605.5" y1="685.5" x2="1605.5" y2="947.2" stroke="#dcdcdc" stroke-width="1" />
<line x1="1652.5" y1="685.5" x2="1652.5" y2="947.2" stroke="#dcdcdc" stroke-width="1" />
<line x1="1685.5" y1="685.5" x2="1685.5" y2="947.2" stroke="#dcdcdc" stroke-width="1" />
<line x1="1711.5" y1="685.5" x2="1711.5" y2="947.2" stroke="#dcdcdc" stroke-width="1" />
<line x1="1732.5" y1="685.5" x2="1732.5" y2="947.2" stroke="#dcdcdc" stroke-width="1" />
<line x1="1750.5" y1="685.5" x2="1750.5" y2="947.2" stroke="#dcdcdc" stroke-width="1" />
<line x1="1766.5" y1="685.5" x2="1766.5" y2="947.2" stroke="#dcdcdc" stroke-width="1" />
<line x1="1780.5" y1="685.5" x2="1780.5" y2="947.2" stroke="#dcdcdc" stroke-width="1" />
<line x1="1524.5" y1="685.5" x2="1524.5" y2="947.2" stroke="#888888" stroke-width="1.15" />
<line x1="1792.5" y1="685.5" x2="1792.5" y2="947.2" stroke="#888888" stroke-width="1.15" />
<line x1="1337" y1="737.5" x2="1873" y2="737.5" stroke="#888888" stroke-width="1.15" />
<line x1="1337" y1="790.5" x2="1873" y2="790.5" stroke="#888888" stroke-width="1.15" />
<line x1="1337" y1="842.5" x2="1873" y2="842.5" stroke="#888888" stroke-width="1.15" />
<line x1="1337" y1="894.5" x2="1873" y2="894.5" stroke="#888888" stroke-width="1.15" />
<rect x="1337.5" y="685.5" width="536" height="262" fill="none" stroke="#858585" stroke-width="1.3" rx="0" />
<text transform="translate(1331.5,688.0) scale(0.93,1)" font-size="13.97" fill="#1a1a1a" stroke="#1a1a1a" text-anchor="end">50</text>
<text transform="translate(1331.5,740.34) scale(0.93,1)" font-size="13.97" fill="#1a1a1a" stroke="#1a1a1a" text-anchor="end">40</text>
<text transform="translate(1331.5,792.6800000000001) scale(0.93,1)" font-size="13.97" fill="#1a1a1a" stroke="#1a1a1a" text-anchor="end">30</text>
<text transform="translate(1331.5,845.02) scale(0.93,1)" font-size="13.97" fill="#1a1a1a" stroke="#1a1a1a" text-anchor="end">20</text>
<text transform="translate(1331.5,897.36) scale(0.93,1)" font-size="13.97" fill="#1a1a1a" stroke="#1a1a1a" text-anchor="end">10</text>
<text transform="translate(1331.5,949.7) scale(0.93,1)" font-size="13.97" fill="#1a1a1a" stroke="#1a1a1a" text-anchor="end">0</text>
<text transform="translate(1893,688.0) scale(0.93,1)" font-size="13.97" fill="#1a1a1a" stroke="#1a1a1a" text-anchor="middle">180</text>
<text transform="translate(1893,740.34) scale(0.93,1)" font-size="13.97" fill="#1a1a1a" stroke="#1a1a1a" text-anchor="middle">108</text>
<text transform="translate(1893,792.6800000000001) scale(0.93,1)" font-size="13.97" fill="#1a1a1a" stroke="#1a1a1a" text-anchor="middle">36</text>
<text transform="translate(1893,845.02) scale(0.93,1)" font-size="13.97" fill="#1a1a1a" stroke="#1a1a1a" text-anchor="middle">-36</text>
<text transform="translate(1893,897.36) scale(0.93,1)" font-size="13.97" fill="#1a1a1a" stroke="#1a1a1a" text-anchor="middle">-108</text>
<text transform="translate(1893,949.7) scale(0.93,1)" font-size="13.97" fill="#1a1a1a" stroke="#1a1a1a" text-anchor="middle">-180</text>
<text transform="translate(1337.0,962.7) scale(0.93,1)" font-size="13.97" fill="#1a1a1a" stroke="#1a1a1a" text-anchor="middle">200Hz</text>
<text transform="translate(1443.647922324106,962.7) scale(0.93,1)" font-size="13.97" fill="#1a1a1a" stroke="#1a1a1a" text-anchor="middle">500</text>
<text transform="translate(1524.3239611620531,962.7) scale(0.93,1)" font-size="13.97" fill="#1a1a1a" stroke="#1a1a1a" text-anchor="middle">1k</text>
<text transform="translate(1605.0,962.7) scale(0.93,1)" font-size="13.97" fill="#1a1a1a" stroke="#1a1a1a" text-anchor="middle">2k</text>
<text transform="translate(1711.647922324106,962.7) scale(0.93,1)" font-size="13.97" fill="#1a1a1a" stroke="#1a1a1a" text-anchor="middle">5k</text>
<text transform="translate(1792.323961162053,962.7) scale(0.93,1)" font-size="13.97" fill="#1a1a1a" stroke="#1a1a1a" text-anchor="middle">10k</text>
<text transform="translate(1873.0,962.7) scale(0.93,1)" font-size="13.97" fill="#1a1a1a" stroke="#1a1a1a" text-anchor="middle">20k</text>
<text transform="translate(1605.0,677.2) scale(0.93,1)" font-size="13.97" fill="#1a1a1a" stroke="#1a1a1a" text-anchor="middle" textLength="72.0" lengthAdjust="spacingAndGlyphs">Impedance</text>
<text transform="translate(1339.3,681.3) scale(0.93,1)" font-size="13.97" fill="#1a1a1a" stroke="#1a1a1a" text-anchor="start">ohm</text>
<text transform="translate(1870,681.3) scale(0.93,1)" font-size="13.97" fill="#1a1a1a" stroke="#1a1a1a" text-anchor="end">deg</text>
<clipPath id="c1337685"><rect x="1337" y="685.5" width="536" height="261.70000000000005"/></clipPath>
<g clip-path="url(#c1337685)">
<path d="M1337.2,823.8 C1344.8,822.0 1364.8,816.5 1382.6,812.8 C1400.4,809.1 1427.7,804.1 1444.3,801.5 C1460.9,798.9 1468.9,798.2 1482.0,797.4 C1495.1,796.5 1508.3,796.3 1523.1,796.4 C1537.9,796.5 1558.4,797.1 1571.0,798.1 C1583.6,799.1 1591.0,799.9 1598.5,802.6 C1606.0,805.4 1610.0,809.8 1615.7,814.6 C1621.4,819.5 1626.5,827.1 1632.8,831.7 C1639.1,836.3 1647.7,840.6 1653.4,842.0 C1659.1,843.4 1659.1,842.9 1667.1,840.3 C1675.1,837.7 1690.0,830.6 1701.4,826.6 C1712.8,822.6 1721.4,818.9 1735.7,816.3 C1750.0,813.7 1764.1,812.1 1787.1,811.1 C1810.1,810.1 1859.3,810.5 1873.8,810.4" stroke="#9a9a9a" stroke-width="1.3" fill="none" stroke-linejoin="round" stroke-linecap="round" />
<path d="M1337.2,930.0 C1344.8,929.9 1364.8,930.1 1382.6,929.4 C1400.4,928.7 1420.9,928.3 1444.3,926.0 C1467.7,923.7 1503.1,918.7 1523.1,915.7 C1543.1,912.7 1553.4,910.4 1564.3,907.8 C1575.2,905.2 1581.4,903.3 1588.3,900.3 C1595.2,897.3 1599.7,893.7 1605.4,890.0 C1611.1,886.3 1617.3,879.1 1622.5,878.0 C1627.7,876.9 1631.1,878.5 1636.3,883.1 C1641.5,887.7 1647.1,899.4 1653.4,905.4 C1659.7,911.4 1666.0,916.1 1674.0,919.1 C1682.0,922.1 1691.1,923.0 1701.4,923.6 C1711.7,924.2 1707.0,923.6 1735.7,922.5 C1764.4,921.4 1850.8,917.7 1873.8,916.7" stroke="#606060" stroke-width="2.6" fill="none" stroke-linejoin="round" stroke-linecap="round" />
</g>
</svg>
</body></html>
